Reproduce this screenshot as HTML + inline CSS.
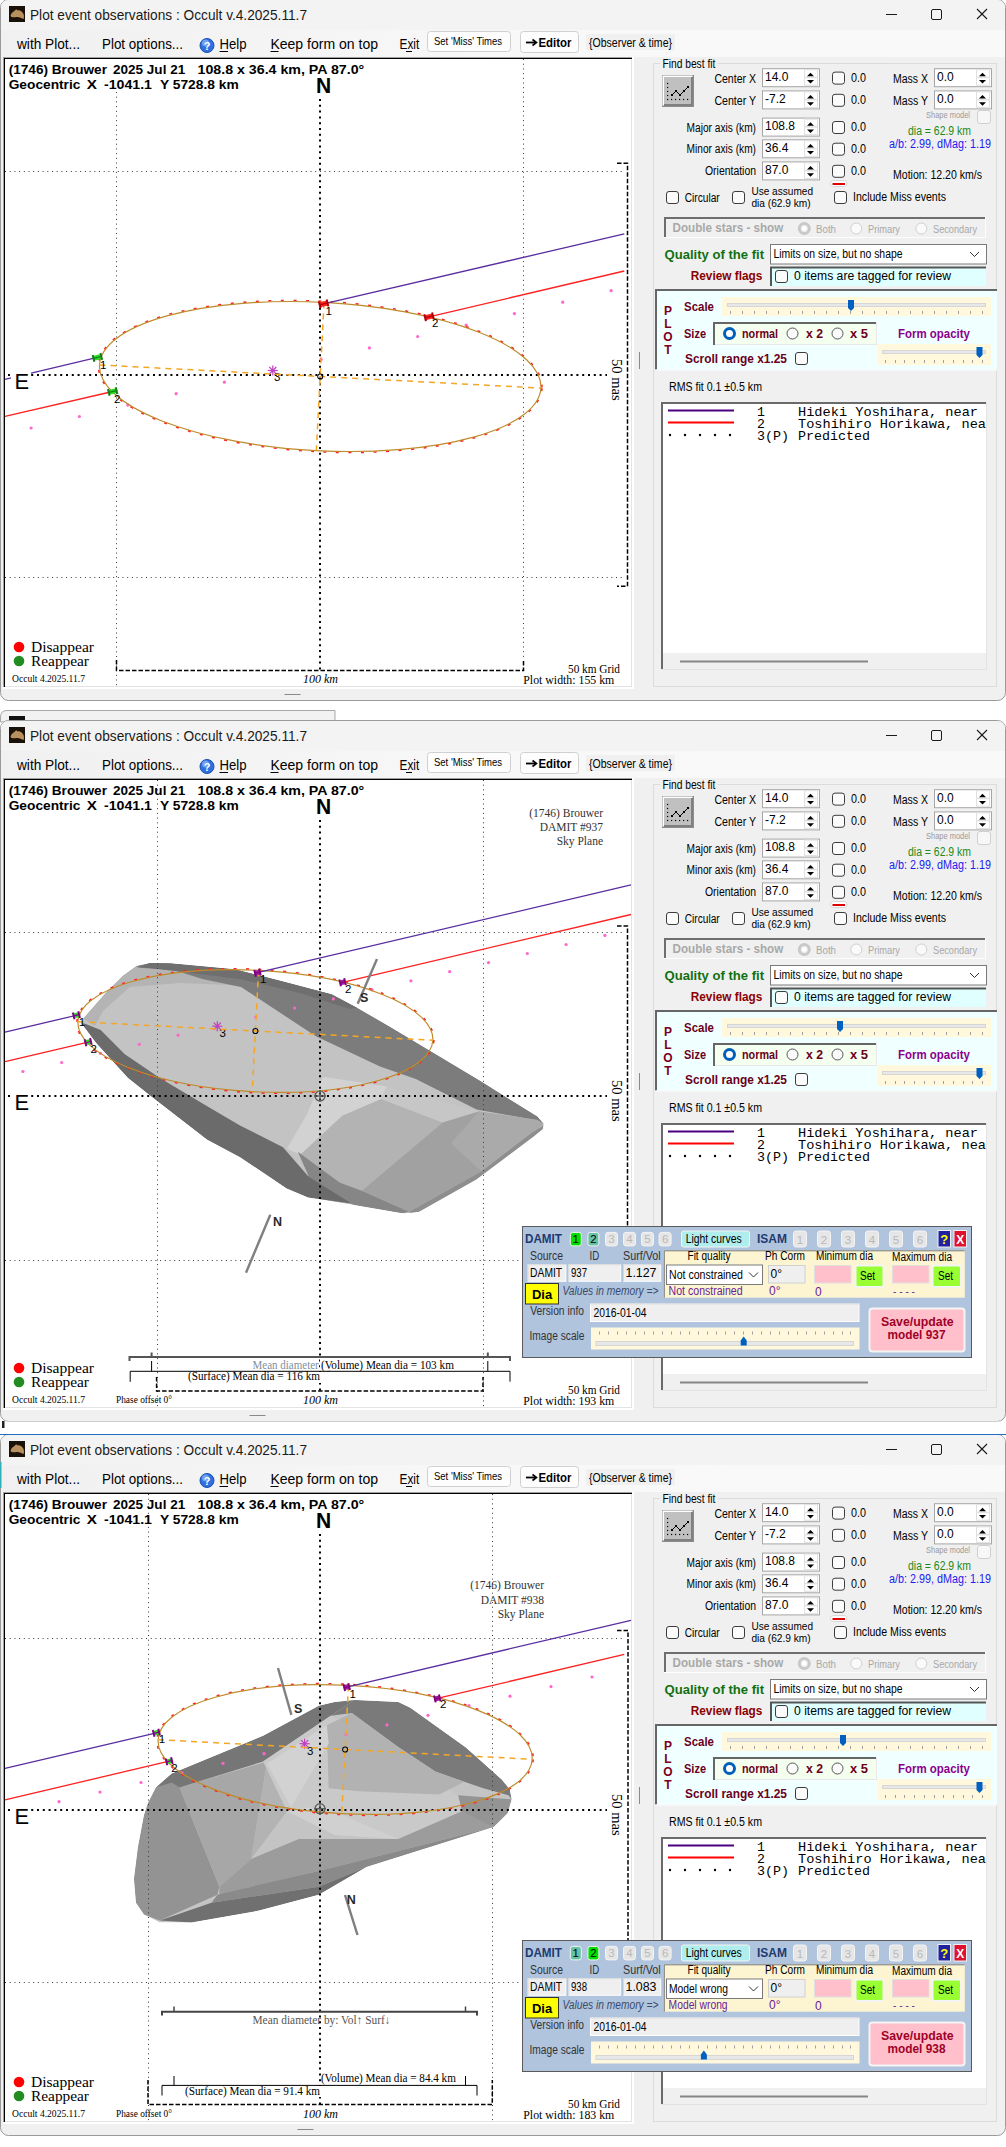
<!DOCTYPE html>
<html><head><meta charset="utf-8"><style>
html,body{margin:0;padding:0;background:#fff;}
svg{display:block;font-family:"Liberation Sans", sans-serif;}
</style></head><body>
<svg width="1006" height="2147" viewBox="0 0 1006 2147">
<defs><linearGradient id="mg" x1="0" y1="0" x2="1006" y2="0" gradientUnits="userSpaceOnUse"><stop offset="0" stop-color="#f0f0f0"/><stop offset="0.5" stop-color="#f8f8f8"/><stop offset="1" stop-color="#f9f9f9"/></linearGradient></defs>
<rect x="0" y="0" width="1006" height="2147" fill="#fff"/>

<rect x="0.5" y="-0.5" width="1005" height="701" fill="#f0f0f0" stroke="#9a9a9a" stroke-width="1" rx="8" />
<path d="M1,8 Q1,0 9,0 L997,0 Q1005,0 1005,8 L1005,30 L1,30 Z" fill="#f3f3f3"/>
<rect x="1" y="30" width="1004" height="27" fill="url(#mg)" />
<rect x="9" y="6" width="16" height="16" fill="#1a1208" />
<path d="M10.5,16 C11,13 13,12 14.5,11 C15.5,9.5 17,9 17.5,10.5 C19,10 21,10.5 22.5,12.5 C24,14 24.5,17 23.5,19 C21.5,18.5 19,16.5 16.5,17 C14.5,17.3 12,17.8 10.5,16 Z" fill="#b8905e" />
<text x="30" y="20.3" font-size="14.2" fill="#1a1a1a" textLength="277" lengthAdjust="spacingAndGlyphs" >Plot event observations : Occult v.4.2025.11.7</text>
<line x1="886" y1="14.5" x2="897" y2="14.5" stroke="#1a1a1a" stroke-width="1" />
<rect x="931.5" y="9.5" width="10" height="10" fill="none" stroke="#1a1a1a" stroke-width="1" rx="1.5" />
<line x1="977" y1="9" x2="987" y2="19" stroke="#1a1a1a" stroke-width="1.1" />
<line x1="987" y1="9" x2="977" y2="19" stroke="#1a1a1a" stroke-width="1.1" />
<text x="17" y="48.9" font-size="14" textLength="63" lengthAdjust="spacingAndGlyphs" >with Plot...</text>
<text x="102" y="48.9" font-size="14" textLength="81" lengthAdjust="spacingAndGlyphs" >Plot options...</text>
<circle cx="207" cy="45.5" r="7" fill="#2f6fe0" stroke="#1b4fb0" stroke-width="1"/>
<circle cx="205.5" cy="43" r="3.5" fill="#9cc4ff" opacity=".6"/>
<text x="207" y="50" font-size="11" font-weight="bold" fill="#fff" text-anchor="middle" >?</text>
<text x="219.5" y="48.9" font-size="14" textLength="27" lengthAdjust="spacingAndGlyphs" >Help</text>
<line x1="219.5" y1="51.5" x2="228" y2="51.5" stroke="#000" stroke-width="1" />
<text x="270.4" y="48.9" font-size="14" textLength="107.6" lengthAdjust="spacingAndGlyphs" >Keep form on top</text>
<line x1="270.5" y1="51.5" x2="278.5" y2="51.5" stroke="#000" stroke-width="1" />
<text x="399.5" y="48.9" font-size="14" textLength="19.7" lengthAdjust="spacingAndGlyphs" >Exit</text>
<line x1="406" y1="51.5" x2="412" y2="51.5" stroke="#000" stroke-width="1" />
<rect x="427.5" y="31.5" width="83" height="20" fill="#fdfdfd" stroke="#d0d0d0" stroke-width="1" rx="3" />
<text x="434" y="45" font-size="10.5" textLength="68" lengthAdjust="spacingAndGlyphs" >Set 'Miss' Times</text>
<rect x="520.5" y="31.5" width="58" height="21" fill="#fdfdfd" stroke="#d0d0d0" stroke-width="1" rx="3" />
<line x1="526" y1="42.5" x2="535" y2="42.5" stroke="#000" stroke-width="1.8" />
<path d="M532.5,39.5 L536.5,42.5 L532.5,45.5" fill="none" stroke="#000" stroke-width="1.6" />
<text x="538.5" y="47" font-size="13.3" font-weight="bold" textLength="33" lengthAdjust="spacingAndGlyphs" >Editor</text>
<rect x="586" y="34" width="89" height="16" fill="#f0f0f0" />
<text x="589" y="46.5" font-size="12" textLength="83" lengthAdjust="spacingAndGlyphs" >{Observer &amp; time}</text>
<rect x="3" y="57" width="631" height="632" fill="#ffffff" />
<rect x="3" y="57" width="629" height="1" fill="#a0a0a0" />
<rect x="3" y="57" width="1" height="630" fill="#a0a0a0" />
<rect x="4" y="58" width="628" height="1" fill="#000" />
<rect x="4" y="58" width="1" height="629" fill="#000" />
<rect x="5" y="686" width="627" height="1" fill="#e3e3e3" />
<rect x="631" y="59" width="1" height="628" fill="#e3e3e3" />
<line x1="284.5" y1="694.5" x2="300.5" y2="694.5" stroke="#8a8a8a" stroke-width="1" />
<line x1="639.5" y1="352" x2="639.5" y2="369" stroke="#8a8a8a" stroke-width="1" />
<line x1="116.5" y1="92" x2="116.5" y2="686" stroke="#383838" stroke-width="1" stroke-dasharray="1 3.7"/>
<line x1="523.5" y1="59" x2="523.5" y2="660" stroke="#383838" stroke-width="1" stroke-dasharray="1 3.7"/>
<line x1="5" y1="171.5" x2="625" y2="171.5" stroke="#383838" stroke-width="1" stroke-dasharray="1 3.7"/>
<line x1="5" y1="577.5" x2="625" y2="577.5" stroke="#383838" stroke-width="1" stroke-dasharray="1 3.7"/>
<line x1="320" y1="99" x2="320" y2="671" stroke="#000" stroke-width="2" stroke-dasharray="2 3.8"/>
<line x1="8" y1="375" x2="607" y2="375" stroke="#000" stroke-width="2" stroke-dasharray="2 3.8"/>
<path d="M617,163.3 L627.5,163.3 L627.5,586.3 L617,586.3" fill="none" stroke="#000" stroke-width="1.5" stroke-dasharray="4.5 2"/>
<path d="M116.5,660 L116.5,670.5 L523.5,670.5 L523.5,660" fill="none" stroke="#000" stroke-width="1.5" stroke-dasharray="4.5 2"/>
<circle cx="31.1" cy="428.0" r="1.6" fill="#ff66cc"/>
<circle cx="79.4" cy="416.5" r="1.6" fill="#ff66cc"/>
<circle cx="127.8" cy="405.1" r="1.6" fill="#ff66cc"/>
<circle cx="176.1" cy="393.7" r="1.6" fill="#ff66cc"/>
<circle cx="224.4" cy="382.2" r="1.6" fill="#ff66cc"/>
<circle cx="321.1" cy="359.4" r="1.6" fill="#ff66cc"/>
<circle cx="369.4" cy="347.9" r="1.6" fill="#ff66cc"/>
<circle cx="417.7" cy="336.5" r="1.6" fill="#ff66cc"/>
<circle cx="466.1" cy="325.0" r="1.6" fill="#ff66cc"/>
<circle cx="514.4" cy="313.6" r="1.6" fill="#ff66cc"/>
<circle cx="562.7" cy="302.2" r="1.6" fill="#ff66cc"/>
<circle cx="611.1" cy="290.7" r="1.6" fill="#ff66cc"/>
<line x1="267.8" y1="370.5" x2="277.8" y2="370.5" stroke="#c040c0" stroke-width="1.2" transform="rotate(0 272.8 370.5)"/>
<line x1="267.8" y1="370.5" x2="277.8" y2="370.5" stroke="#c040c0" stroke-width="1.2" transform="rotate(45 272.8 370.5)"/>
<line x1="267.8" y1="370.5" x2="277.8" y2="370.5" stroke="#c040c0" stroke-width="1.2" transform="rotate(90 272.8 370.5)"/>
<line x1="267.8" y1="370.5" x2="277.8" y2="370.5" stroke="#c040c0" stroke-width="1.2" transform="rotate(135 272.8 370.5)"/>
<text x="274" y="381" font-size="11.5" >3</text>
<g transform="translate(320.2,376.5) rotate(3)"><ellipse cx="0" cy="0" rx="222" ry="75.2" fill="none" stroke="#ff2020" stroke-width="1.6" stroke-dasharray="3 9.5"/><ellipse cx="0" cy="0" rx="221" ry="74.2" fill="none" stroke="#c08a2a" stroke-width="1.15"/><line x1="-221" y1="0" x2="221" y2="0" stroke="#f5a623" stroke-width="1.5" stroke-dasharray="6 5"/><line x1="0" y1="-74.2" x2="0" y2="74.2" stroke="#f5a623" stroke-width="1.5" stroke-dasharray="6 5"/><circle cx="0" cy="0" r="2.5" fill="none" stroke="#000" stroke-width="1"/></g>
<line x1="5" y1="379.3" x2="97.4" y2="357.4" stroke="#5a2ea0" stroke-width="1.3" />
<line x1="323.6" y1="303.9" x2="624.3" y2="233.9" stroke="#5a2ea0" stroke-width="1.3" />
<line x1="5" y1="416.3" x2="112.7" y2="391.5" stroke="#ff2020" stroke-width="1.3" />
<line x1="429" y1="316.8" x2="624.3" y2="271" stroke="#ff2020" stroke-width="1.3" />
<g transform="translate(97.4,357.4) rotate(-13.2)"><rect x="-4" y="-2.5" width="8" height="5" fill="#22dd22"/><rect x="-4" y="-0.6" width="8" height="1.2" fill="#1a7a1a"/><rect x="-5" y="-3.5" width="2" height="7" fill="#1a7a1a"/><rect x="3" y="-3.5" width="2" height="7" fill="#1a7a1a"/></g>
<g transform="translate(112.7,391.5) rotate(-13.2)"><rect x="-4" y="-2.5" width="8" height="5" fill="#22dd22"/><rect x="-4" y="-0.6" width="8" height="1.2" fill="#1a7a1a"/><rect x="-5" y="-3.5" width="2" height="7" fill="#1a7a1a"/><rect x="3" y="-3.5" width="2" height="7" fill="#1a7a1a"/></g>
<g transform="translate(323.6,303.9) rotate(-13.2)"><rect x="-4" y="-2.5" width="8" height="5" fill="#ff2020"/><rect x="-4" y="-0.6" width="8" height="1.2" fill="#b00000"/><rect x="-5" y="-3.5" width="2" height="7" fill="#b00000"/><rect x="3" y="-3.5" width="2" height="7" fill="#b00000"/></g>
<g transform="translate(429,316.8) rotate(-13.2)"><rect x="-4" y="-2.5" width="8" height="5" fill="#ff2020"/><rect x="-4" y="-0.6" width="8" height="1.2" fill="#b00000"/><rect x="-5" y="-3.5" width="2" height="7" fill="#b00000"/><rect x="3" y="-3.5" width="2" height="7" fill="#b00000"/></g>
<text x="100" y="369" font-size="11.5" >1</text>
<text x="114" y="403" font-size="11.5" >2</text>
<text x="325.5" y="315" font-size="11.5" >1</text>
<text x="432" y="327" font-size="11.5" >2</text>
<rect x="11" y="369" width="20" height="22" fill="#fff" />
<text x="14.6" y="388.7" font-size="22.5" textLength="14.6" lengthAdjust="spacingAndGlyphs" >E</text>
<text x="8.7" y="73.8" font-size="13.3" font-weight="bold" textLength="98.3" lengthAdjust="spacingAndGlyphs" >(1746) Brouwer</text>
<text x="113" y="73.8" font-size="13.3" font-weight="bold" textLength="72.2" lengthAdjust="spacingAndGlyphs" >2025 Jul 21</text>
<text x="197.5" y="73.8" font-size="13.3" font-weight="bold" textLength="166.8" lengthAdjust="spacingAndGlyphs" >108.8 x 36.4 km, PA 87.0°</text>
<text x="8.7" y="89.4" font-size="13.3" font-weight="bold" textLength="71.7" lengthAdjust="spacingAndGlyphs" >Geocentric</text>
<text x="86.8" y="89.4" font-size="13.3" font-weight="bold" textLength="10.2" lengthAdjust="spacingAndGlyphs" >X</text>
<text x="104" y="89.4" font-size="13.3" font-weight="bold" textLength="48" lengthAdjust="spacingAndGlyphs" >-1041.1</text>
<text x="160" y="89.4" font-size="13.3" font-weight="bold" textLength="78.7" lengthAdjust="spacingAndGlyphs" >Y 5728.8 km</text>
<text x="316" y="93.1" font-size="21.5" font-weight="bold" textLength="15.2" lengthAdjust="spacingAndGlyphs" >N</text>
<text transform="translate(612,359) rotate(90)" x="0" y="0" font-size="15" font-family='"Liberation Serif", serif' textLength="41.7" lengthAdjust="spacingAndGlyphs">50 mas</text>
<circle cx="19" cy="647" r="5.3" fill="#ff0000"/>
<circle cx="19" cy="661" r="5.3" fill="#228b22"/>
<text x="31" y="652" font-size="15.5" font-family='"Liberation Serif", serif' textLength="63" lengthAdjust="spacingAndGlyphs" >Disappear</text>
<text x="31" y="666" font-size="15.5" font-family='"Liberation Serif", serif' textLength="58" lengthAdjust="spacingAndGlyphs" >Reappear</text>
<text x="12" y="681.5" font-size="10" font-family='"Liberation Serif", serif' textLength="73" lengthAdjust="spacingAndGlyphs" >Occult 4.2025.11.7</text>
<rect x="301" y="673.5" width="39" height="12" fill="#fff" />
<text x="303" y="683" font-size="12" font-family='"Liberation Serif", serif' font-style="italic" textLength="35" lengthAdjust="spacingAndGlyphs" >100 km</text>
<text x="568" y="672.6" font-size="12" font-family='"Liberation Serif", serif' textLength="52" lengthAdjust="spacingAndGlyphs" >50 km Grid</text>
<text x="523.3" y="683.7" font-size="13" font-family='"Liberation Serif", serif' textLength="91" lengthAdjust="spacingAndGlyphs" >Plot width: 155 km</text>
<rect x="653.5" y="63.5" width="343" height="623" fill="none" stroke="#dcdcdc" stroke-width="1" />
<rect x="660" y="60" width="58" height="8" fill="#f0f0f0" />
<text x="662.4" y="68" font-size="12" textLength="53" lengthAdjust="spacingAndGlyphs" >Find best fit</text>
<rect x="662" y="75" width="32" height="32" fill="#8c8c8c" />
<rect x="662.5" y="75.5" width="30" height="30" fill="#ffffff" />
<rect x="664" y="77" width="29" height="29" fill="#808080" />
<rect x="664" y="77" width="27" height="27" fill="#c0c0c0" />
<rect x="667" y="82.9" width="1.2" height="1.2" fill="#000" />
<rect x="667" y="86.9" width="1.2" height="1.2" fill="#000" />
<rect x="667" y="90.9" width="1.2" height="1.2" fill="#000" />
<rect x="667" y="94.9" width="1.2" height="1.2" fill="#000" />
<rect x="667" y="98.9" width="1.2" height="1.2" fill="#000" />
<rect x="671.0" y="98.9" width="1.2" height="1.2" fill="#000" />
<rect x="675.0" y="98.9" width="1.2" height="1.2" fill="#000" />
<rect x="679.0" y="98.9" width="1.2" height="1.2" fill="#000" />
<rect x="683.0" y="98.9" width="1.2" height="1.2" fill="#000" />
<rect x="687.0" y="98.9" width="1.2" height="1.2" fill="#000" />
<path d="M672,95 L676,91 L680,95 L684,91 L688,87" fill="none" stroke="#000" stroke-width="1" />
<rect x="671" y="94" width="2" height="2" fill="#000" />
<rect x="675" y="90" width="2" height="2" fill="#000" />
<rect x="679" y="94" width="2" height="2" fill="#000" />
<rect x="683" y="90" width="2" height="2" fill="#000" />
<rect x="687" y="86" width="2" height="2" fill="#000" />
<text x="714.4" y="82.6" font-size="12" textLength="41.60000000000002" lengthAdjust="spacingAndGlyphs" >Center X</text>
<rect x="762.5" y="68.7" width="57" height="18" fill="#fff" stroke="#a6a6a6" stroke-width="1" />
<rect x="804.5" y="69.7" width="13" height="7.5" fill="#fff" stroke="#e0e0e0" stroke-width="1" />
<rect x="804.5" y="77.7" width="13" height="7.5" fill="#fff" stroke="#e0e0e0" stroke-width="1" />
<path d="M807.0,76.33 L810.5,72.83 L814.0,76.33 Z" fill="#000" />
<path d="M807.0,80.0 L810.5,83.5 L814.0,80.0 Z" fill="#000" />
<text x="765" y="80.7" font-size="12" >14.0</text>
<rect x="832.5" y="72.10000000000001" width="12" height="12" fill="#fbfbfb" stroke="#3c3c3c" stroke-width="1" rx="2.5" />
<text x="851" y="81.60000000000001" font-size="12" textLength="15" lengthAdjust="spacingAndGlyphs" >0.0</text>
<text x="714.4" y="104.6" font-size="12" textLength="41.60000000000002" lengthAdjust="spacingAndGlyphs" >Center Y</text>
<rect x="762.5" y="90.9" width="57" height="18" fill="#fff" stroke="#a6a6a6" stroke-width="1" />
<rect x="804.5" y="91.9" width="13" height="7.5" fill="#fff" stroke="#e0e0e0" stroke-width="1" />
<rect x="804.5" y="99.9" width="13" height="7.5" fill="#fff" stroke="#e0e0e0" stroke-width="1" />
<path d="M807.0,98.53 L810.5,95.03 L814.0,98.53 Z" fill="#000" />
<path d="M807.0,102.2 L810.5,105.7 L814.0,102.2 Z" fill="#000" />
<text x="765" y="102.9" font-size="12" >-7.2</text>
<rect x="832.5" y="94.30000000000001" width="12" height="12" fill="#fbfbfb" stroke="#3c3c3c" stroke-width="1" rx="2.5" />
<text x="851" y="103.80000000000001" font-size="12" textLength="15" lengthAdjust="spacingAndGlyphs" >0.0</text>
<text x="686.6" y="131.7" font-size="12" textLength="69.39999999999998" lengthAdjust="spacingAndGlyphs" >Major axis (km)</text>
<rect x="762.5" y="118.1" width="57" height="18" fill="#fff" stroke="#a6a6a6" stroke-width="1" />
<rect x="804.5" y="119.1" width="13" height="7.5" fill="#fff" stroke="#e0e0e0" stroke-width="1" />
<rect x="804.5" y="127.1" width="13" height="7.5" fill="#fff" stroke="#e0e0e0" stroke-width="1" />
<path d="M807.0,125.72999999999999 L810.5,122.22999999999999 L814.0,125.72999999999999 Z" fill="#000" />
<path d="M807.0,129.4 L810.5,132.9 L814.0,129.4 Z" fill="#000" />
<text x="765" y="130.1" font-size="12" >108.8</text>
<rect x="832.5" y="121.5" width="12" height="12" fill="#fbfbfb" stroke="#3c3c3c" stroke-width="1" rx="2.5" />
<text x="851" y="131.0" font-size="12" textLength="15" lengthAdjust="spacingAndGlyphs" >0.0</text>
<text x="686.6" y="153.4" font-size="12" textLength="69.39999999999998" lengthAdjust="spacingAndGlyphs" >Minor axis (km)</text>
<rect x="762.5" y="139.8" width="57" height="18" fill="#fff" stroke="#a6a6a6" stroke-width="1" />
<rect x="804.5" y="140.8" width="13" height="7.5" fill="#fff" stroke="#e0e0e0" stroke-width="1" />
<rect x="804.5" y="148.8" width="13" height="7.5" fill="#fff" stroke="#e0e0e0" stroke-width="1" />
<path d="M807.0,147.43 L810.5,143.93 L814.0,147.43 Z" fill="#000" />
<path d="M807.0,151.10000000000002 L810.5,154.60000000000002 L814.0,151.10000000000002 Z" fill="#000" />
<text x="765" y="151.8" font-size="12" >36.4</text>
<rect x="832.5" y="143.20000000000002" width="12" height="12" fill="#fbfbfb" stroke="#3c3c3c" stroke-width="1" rx="2.5" />
<text x="851" y="152.70000000000002" font-size="12" textLength="15" lengthAdjust="spacingAndGlyphs" >0.0</text>
<text x="705" y="175.2" font-size="12" textLength="51" lengthAdjust="spacingAndGlyphs" >Orientation</text>
<rect x="762.5" y="161.9" width="57" height="18" fill="#fff" stroke="#a6a6a6" stroke-width="1" />
<rect x="804.5" y="162.9" width="13" height="7.5" fill="#fff" stroke="#e0e0e0" stroke-width="1" />
<rect x="804.5" y="170.9" width="13" height="7.5" fill="#fff" stroke="#e0e0e0" stroke-width="1" />
<path d="M807.0,169.53 L810.5,166.03 L814.0,169.53 Z" fill="#000" />
<path d="M807.0,173.20000000000002 L810.5,176.70000000000002 L814.0,173.20000000000002 Z" fill="#000" />
<text x="765" y="173.9" font-size="12" >87.0</text>
<rect x="832.5" y="165.3" width="12" height="12" fill="#fbfbfb" stroke="#3c3c3c" stroke-width="1" rx="2.5" />
<text x="851" y="174.8" font-size="12" textLength="15" lengthAdjust="spacingAndGlyphs" >0.0</text>
<text x="893" y="82.6" font-size="12" textLength="35" lengthAdjust="spacingAndGlyphs" >Mass X</text>
<rect x="934.5" y="68.7" width="57" height="18" fill="#fff" stroke="#a6a6a6" stroke-width="1" />
<rect x="976.5" y="69.7" width="13" height="7.5" fill="#fff" stroke="#e0e0e0" stroke-width="1" />
<rect x="976.5" y="77.7" width="13" height="7.5" fill="#fff" stroke="#e0e0e0" stroke-width="1" />
<path d="M979.0,76.33 L982.5,72.83 L986.0,76.33 Z" fill="#000" />
<path d="M979.0,80.0 L982.5,83.5 L986.0,80.0 Z" fill="#000" />
<text x="937" y="80.7" font-size="12" >0.0</text>
<text x="893" y="104.6" font-size="12" textLength="35" lengthAdjust="spacingAndGlyphs" >Mass Y</text>
<rect x="934.5" y="90.9" width="57" height="18" fill="#fff" stroke="#a6a6a6" stroke-width="1" />
<rect x="976.5" y="91.9" width="13" height="7.5" fill="#fff" stroke="#e0e0e0" stroke-width="1" />
<rect x="976.5" y="99.9" width="13" height="7.5" fill="#fff" stroke="#e0e0e0" stroke-width="1" />
<path d="M979.0,98.53 L982.5,95.03 L986.0,98.53 Z" fill="#000" />
<path d="M979.0,102.2 L982.5,105.7 L986.0,102.2 Z" fill="#000" />
<text x="937" y="102.9" font-size="12" >0.0</text>
<text x="926" y="118" font-size="8.5" fill="#9a9a9a" textLength="44" lengthAdjust="spacingAndGlyphs" >Shape model</text>
<rect x="977.5" y="110.5" width="13" height="13" fill="#f7f7f7" stroke="#cfcfcf" stroke-width="1" rx="2.5" />
<text x="908" y="135" font-size="12" fill="#1a8a1a" textLength="63" lengthAdjust="spacingAndGlyphs" >dia = 62.9 km</text>
<text x="889" y="148" font-size="12" fill="#1c1cf0" textLength="102" lengthAdjust="spacingAndGlyphs" >a/b: 2.99, dMag: 1.19</text>
<text x="893" y="179" font-size="12" textLength="89" lengthAdjust="spacingAndGlyphs" >Motion: 12.20 km/s</text>
<rect x="830.5" y="180.5" width="16.5" height="6" fill="#fff" stroke="#d8d8d8" stroke-width="1" rx="3" />
<line x1="832.5" y1="184" x2="845" y2="184" stroke="#e00000" stroke-width="2" />
<rect x="666.5" y="191.5" width="12" height="12" fill="#fbfbfb" stroke="#3c3c3c" stroke-width="1" rx="2.5" />
<text x="684.7" y="201.6" font-size="12" textLength="35" lengthAdjust="spacingAndGlyphs" >Circular</text>
<rect x="732.5" y="191.5" width="12" height="12" fill="#fbfbfb" stroke="#3c3c3c" stroke-width="1" rx="2.5" />
<text x="751.4" y="195" font-size="11" textLength="61.6" lengthAdjust="spacingAndGlyphs" >Use assumed</text>
<text x="751.4" y="207.3" font-size="11" textLength="59.3" lengthAdjust="spacingAndGlyphs" >dia (62.9 km)</text>
<rect x="834.5" y="191.5" width="12" height="12" fill="#fbfbfb" stroke="#3c3c3c" stroke-width="1" rx="2.5" />
<text x="853" y="201" font-size="12" textLength="93" lengthAdjust="spacingAndGlyphs" >Include Miss events</text>
<rect x="664.5" y="217.5" width="321" height="20" fill="#f0f0f0" stroke="#fdfdfd" stroke-width="1" />
<path d="M665,237 L665,218 L985,218" fill="none" stroke="#6e6e6e" stroke-width="2" />
<text x="672.6" y="231.6" font-size="12" font-weight="bold" fill="#a8a8a8" textLength="110.7" lengthAdjust="spacingAndGlyphs" >Double stars - show</text>
<circle cx="804.3" cy="228.5" r="5" fill="none" stroke="#c8c8c8" stroke-width="3"/>
<circle cx="804.3" cy="228.5" r="2.2" fill="#fff"/>
<text x="816" y="233" font-size="10" fill="#a8a8a8" textLength="20" lengthAdjust="spacingAndGlyphs" >Both</text>
<circle cx="856.3" cy="228.5" r="5.5" fill="#fafafa" stroke="#cfcfcf" stroke-width="1"/>
<text x="868" y="233" font-size="10" fill="#a8a8a8" textLength="32" lengthAdjust="spacingAndGlyphs" >Primary</text>
<circle cx="921.3" cy="228.5" r="5.5" fill="#fafafa" stroke="#cfcfcf" stroke-width="1"/>
<text x="933" y="233" font-size="10" fill="#a8a8a8" textLength="44" lengthAdjust="spacingAndGlyphs" >Secondary</text>
<text x="664.6" y="259.4" font-size="12.5" font-weight="bold" fill="#107010" textLength="99.4" lengthAdjust="spacingAndGlyphs" >Quality of the fit</text>
<rect x="770.5" y="244.5" width="216" height="19.5" fill="#fff" stroke="#7a7a7a" stroke-width="1" />
<text x="773.5" y="258" font-size="12" textLength="129" lengthAdjust="spacingAndGlyphs" >Limits on size, but no shape</text>
<path d="M970,252 L974.5,256.5 L979,252" fill="none" stroke="#333" stroke-width="1" />
<text x="762.4" y="279.6" font-size="12.5" font-weight="bold" fill="#8b0000" text-anchor="end" textLength="71.7" lengthAdjust="spacingAndGlyphs" >Review flags</text>
<rect x="770" y="266.5" width="216" height="19.5" fill="#e0ffff" />
<path d="M771,286 L771,267.5 L986,267.5" fill="none" stroke="#555" stroke-width="2" />
<rect x="775.5" y="270.5" width="12" height="12" fill="#fbfbfb" stroke="#3c3c3c" stroke-width="1" rx="2.5" />
<text x="794" y="279.6" font-size="12" textLength="157" lengthAdjust="spacingAndGlyphs" >0 items are tagged for review</text>
<rect x="655.5" y="289" width="341.5" height="80.5" fill="#f0ffff" />
<path d="M656,369.5 L656,290 L997,290" fill="none" stroke="#666" stroke-width="2" />
<line x1="655.5" y1="370" x2="997" y2="370" stroke="#fdfdfd" stroke-width="1" />
<text x="668" y="314.7" font-size="12" font-weight="bold" fill="#7a0020" text-anchor="middle" >P</text>
<text x="668" y="327.7" font-size="12" font-weight="bold" fill="#7a0020" text-anchor="middle" >L</text>
<text x="668" y="340.6" font-size="12" font-weight="bold" fill="#7a0020" text-anchor="middle" >O</text>
<text x="668" y="353.6" font-size="12" font-weight="bold" fill="#7a0020" text-anchor="middle" >T</text>
<text x="684" y="311" font-size="12.5" font-weight="bold" fill="#6b0020" textLength="30" lengthAdjust="spacingAndGlyphs" >Scale</text>
<rect x="722" y="297" width="269" height="19" fill="#fff8dc" />
<rect x="727.5" y="303.5" width="258" height="3" fill="#e7e7e7" stroke="#d6d6d6" stroke-width="1" />
<line x1="730.5" y1="311" x2="730.5" y2="314" stroke="#a0a0a0" stroke-width="1" />
<line x1="742.5" y1="311" x2="742.5" y2="314" stroke="#a0a0a0" stroke-width="1" />
<line x1="754.5" y1="311" x2="754.5" y2="314" stroke="#a0a0a0" stroke-width="1" />
<line x1="766.5" y1="311" x2="766.5" y2="314" stroke="#a0a0a0" stroke-width="1" />
<line x1="778.5" y1="311" x2="778.5" y2="314" stroke="#a0a0a0" stroke-width="1" />
<line x1="790.5" y1="311" x2="790.5" y2="314" stroke="#a0a0a0" stroke-width="1" />
<line x1="802.5" y1="311" x2="802.5" y2="314" stroke="#a0a0a0" stroke-width="1" />
<line x1="814.5" y1="311" x2="814.5" y2="314" stroke="#a0a0a0" stroke-width="1" />
<line x1="826.5" y1="311" x2="826.5" y2="314" stroke="#a0a0a0" stroke-width="1" />
<line x1="838.5" y1="311" x2="838.5" y2="314" stroke="#a0a0a0" stroke-width="1" />
<line x1="850.5" y1="311" x2="850.5" y2="314" stroke="#a0a0a0" stroke-width="1" />
<line x1="862.5" y1="311" x2="862.5" y2="314" stroke="#a0a0a0" stroke-width="1" />
<line x1="874.5" y1="311" x2="874.5" y2="314" stroke="#a0a0a0" stroke-width="1" />
<line x1="886.5" y1="311" x2="886.5" y2="314" stroke="#a0a0a0" stroke-width="1" />
<line x1="898.5" y1="311" x2="898.5" y2="314" stroke="#a0a0a0" stroke-width="1" />
<line x1="910.5" y1="311" x2="910.5" y2="314" stroke="#a0a0a0" stroke-width="1" />
<line x1="922.5" y1="311" x2="922.5" y2="314" stroke="#a0a0a0" stroke-width="1" />
<line x1="934.5" y1="311" x2="934.5" y2="314" stroke="#a0a0a0" stroke-width="1" />
<line x1="946.5" y1="311" x2="946.5" y2="314" stroke="#a0a0a0" stroke-width="1" />
<line x1="958.5" y1="311" x2="958.5" y2="314" stroke="#a0a0a0" stroke-width="1" />
<line x1="970.5" y1="311" x2="970.5" y2="314" stroke="#a0a0a0" stroke-width="1" />
<line x1="982.5" y1="311" x2="982.5" y2="314" stroke="#a0a0a0" stroke-width="1" />
<path d="M848,300 L854,300 L854,308 L851,311 L848,308 Z" fill="#0060c0" />
<text x="684" y="338" font-size="12.5" font-weight="bold" fill="#6b0020" textLength="22" lengthAdjust="spacingAndGlyphs" >Size</text>
<rect x="713.5" y="322.5" width="163" height="22" fill="#f5fff0" stroke="#e8e8e8" stroke-width="1" />
<path d="M714,345 L714,323 L876,323" fill="none" stroke="#666" stroke-width="2" />
<circle cx="729.5" cy="333.5" r="5" fill="#fff" stroke="#005fb8" stroke-width="3"/>
<text x="742" y="338" font-size="12.5" font-weight="bold" fill="#6b0020" textLength="36" lengthAdjust="spacingAndGlyphs" >normal</text>
<circle cx="792.5" cy="333.5" r="5.5" fill="#fafafa" stroke="#555" stroke-width="1"/>
<text x="806" y="338" font-size="12.5" font-weight="bold" fill="#6b0020" textLength="17" lengthAdjust="spacingAndGlyphs" >x 2</text>
<circle cx="837.5" cy="333.5" r="5.5" fill="#fafafa" stroke="#555" stroke-width="1"/>
<text x="850" y="338" font-size="12.5" font-weight="bold" fill="#6b0020" textLength="18" lengthAdjust="spacingAndGlyphs" >x 5</text>
<text x="898" y="338" font-size="12.5" font-weight="bold" fill="#8b008b" textLength="72" lengthAdjust="spacingAndGlyphs" >Form opacity</text>
<rect x="877" y="344" width="114" height="21" fill="#fff8dc" />
<rect x="882.5" y="350.5" width="103" height="3" fill="#e7e7e7" stroke="#d6d6d6" stroke-width="1" />
<line x1="885.5" y1="360" x2="885.5" y2="363" stroke="#a0a0a0" stroke-width="1" />
<line x1="895.5" y1="360" x2="895.5" y2="363" stroke="#a0a0a0" stroke-width="1" />
<line x1="904.5" y1="360" x2="904.5" y2="363" stroke="#a0a0a0" stroke-width="1" />
<line x1="914.5" y1="360" x2="914.5" y2="363" stroke="#a0a0a0" stroke-width="1" />
<line x1="924.5" y1="360" x2="924.5" y2="363" stroke="#a0a0a0" stroke-width="1" />
<line x1="934.5" y1="360" x2="934.5" y2="363" stroke="#a0a0a0" stroke-width="1" />
<line x1="943.5" y1="360" x2="943.5" y2="363" stroke="#a0a0a0" stroke-width="1" />
<line x1="953.5" y1="360" x2="953.5" y2="363" stroke="#a0a0a0" stroke-width="1" />
<line x1="963.5" y1="360" x2="963.5" y2="363" stroke="#a0a0a0" stroke-width="1" />
<line x1="972.5" y1="360" x2="972.5" y2="363" stroke="#a0a0a0" stroke-width="1" />
<line x1="982.5" y1="360" x2="982.5" y2="363" stroke="#a0a0a0" stroke-width="1" />
<path d="M976.5,347 L982.5,347 L982.5,355 L979.5,358 L976.5,355 Z" fill="#0060c0" />
<text x="685" y="363" font-size="12.5" font-weight="bold" fill="#6b0020" textLength="102" lengthAdjust="spacingAndGlyphs" >Scroll range x1.25</text>
<rect x="795.5" y="352.5" width="12" height="12" fill="#fbfbfb" stroke="#3c3c3c" stroke-width="1" rx="2.5" />
<text x="669" y="391" font-size="12" textLength="93" lengthAdjust="spacingAndGlyphs" >RMS fit 0.1 ±0.5 km</text>
<rect x="661" y="402" width="326" height="268" fill="#fff" />
<path d="M662,670 L662,403 L987,403" fill="none" stroke="#6a6a6a" stroke-width="2" />
<rect x="663" y="653" width="324" height="16" fill="#f0f0f0" />
<line x1="680" y1="661.5" x2="868" y2="661.5" stroke="#858585" stroke-width="2" />
<line x1="986.5" y1="402" x2="986.5" y2="670" stroke="#e3e3e3" stroke-width="1" />
<line x1="661" y1="669.5" x2="987" y2="669.5" stroke="#e3e3e3" stroke-width="1" />
<line x1="668" y1="410.5" x2="734" y2="410.5" stroke="#4b0082" stroke-width="2" />
<line x1="668" y1="422.5" x2="734" y2="422.5" stroke="#ff0000" stroke-width="2" />
<circle cx="670" cy="435" r="1.2" fill="#000"/>
<circle cx="685" cy="435" r="1.2" fill="#000"/>
<circle cx="700" cy="435" r="1.2" fill="#000"/>
<circle cx="715" cy="435" r="1.2" fill="#000"/>
<circle cx="730" cy="435" r="1.2" fill="#000"/>
<text x="757" y="416" font-size="13.2" font-family='"Liberation Mono", monospace' >1</text>
<text x="798" y="416" font-size="13.2" font-family='"Liberation Mono", monospace' textLength="180" lengthAdjust="spacingAndGlyphs" >Hideki Yoshihara, near</text>
<text x="757" y="428" font-size="13.2" font-family='"Liberation Mono", monospace' >2</text>
<text x="798" y="428" font-size="13.2" font-family='"Liberation Mono", monospace' textLength="188" lengthAdjust="spacingAndGlyphs" >Toshihiro Horikawa, nea</text>
<text x="757" y="440" font-size="13.2" font-family='"Liberation Mono", monospace' textLength="32" lengthAdjust="spacingAndGlyphs" >3(P)</text>
<text x="798" y="440" font-size="13.2" font-family='"Liberation Mono", monospace' textLength="72" lengthAdjust="spacingAndGlyphs" >Predicted</text>
<path d="M0.5,722 L0.5,717 Q0.5,710.5 7,710.5 L335,710.5 L335,722 Z" fill="#f2f2f2" stroke="#a8a8a8" stroke-width="1"/>
<rect x="9" y="716" width="16" height="6" fill="#111" />
<rect x="0.5" y="720.5" width="1005" height="701" fill="#f0f0f0" stroke="#9a9a9a" stroke-width="1" rx="8" />
<path d="M1,729 Q1,721 9,721 L997,721 Q1005,721 1005,729 L1005,751 L1,751 Z" fill="#f3f3f3"/>
<rect x="1" y="751" width="1004" height="27" fill="url(#mg)" />
<rect x="9" y="727" width="16" height="16" fill="#1a1208" />
<path d="M10.5,737 C11,734 13,733 14.5,732 C15.5,730.5 17,730 17.5,731.5 C19,731 21,731.5 22.5,733.5 C24,735 24.5,738 23.5,740 C21.5,739.5 19,737.5 16.5,738 C14.5,738.3 12,738.8 10.5,737 Z" fill="#b8905e" />
<text x="30" y="741.3" font-size="14.2" fill="#1a1a1a" textLength="277" lengthAdjust="spacingAndGlyphs" >Plot event observations : Occult v.4.2025.11.7</text>
<line x1="886" y1="735.5" x2="897" y2="735.5" stroke="#1a1a1a" stroke-width="1" />
<rect x="931.5" y="730.5" width="10" height="10" fill="none" stroke="#1a1a1a" stroke-width="1" rx="1.5" />
<line x1="977" y1="730" x2="987" y2="740" stroke="#1a1a1a" stroke-width="1.1" />
<line x1="987" y1="730" x2="977" y2="740" stroke="#1a1a1a" stroke-width="1.1" />
<text x="17" y="769.9" font-size="14" textLength="63" lengthAdjust="spacingAndGlyphs" >with Plot...</text>
<text x="102" y="769.9" font-size="14" textLength="81" lengthAdjust="spacingAndGlyphs" >Plot options...</text>
<circle cx="207" cy="766.5" r="7" fill="#2f6fe0" stroke="#1b4fb0" stroke-width="1"/>
<circle cx="205.5" cy="764" r="3.5" fill="#9cc4ff" opacity=".6"/>
<text x="207" y="771" font-size="11" font-weight="bold" fill="#fff" text-anchor="middle" >?</text>
<text x="219.5" y="769.9" font-size="14" textLength="27" lengthAdjust="spacingAndGlyphs" >Help</text>
<line x1="219.5" y1="772.5" x2="228" y2="772.5" stroke="#000" stroke-width="1" />
<text x="270.4" y="769.9" font-size="14" textLength="107.6" lengthAdjust="spacingAndGlyphs" >Keep form on top</text>
<line x1="270.5" y1="772.5" x2="278.5" y2="772.5" stroke="#000" stroke-width="1" />
<text x="399.5" y="769.9" font-size="14" textLength="19.7" lengthAdjust="spacingAndGlyphs" >Exit</text>
<line x1="406" y1="772.5" x2="412" y2="772.5" stroke="#000" stroke-width="1" />
<rect x="427.5" y="752.5" width="83" height="20" fill="#fdfdfd" stroke="#d0d0d0" stroke-width="1" rx="3" />
<text x="434" y="766" font-size="10.5" textLength="68" lengthAdjust="spacingAndGlyphs" >Set 'Miss' Times</text>
<rect x="520.5" y="752.5" width="58" height="21" fill="#fdfdfd" stroke="#d0d0d0" stroke-width="1" rx="3" />
<line x1="526" y1="763.5" x2="535" y2="763.5" stroke="#000" stroke-width="1.8" />
<path d="M532.5,760.5 L536.5,763.5 L532.5,766.5" fill="none" stroke="#000" stroke-width="1.6" />
<text x="538.5" y="768" font-size="13.3" font-weight="bold" textLength="33" lengthAdjust="spacingAndGlyphs" >Editor</text>
<rect x="586" y="755" width="89" height="16" fill="#f0f0f0" />
<text x="589" y="767.5" font-size="12" textLength="83" lengthAdjust="spacingAndGlyphs" >{Observer &amp; time}</text>
<rect x="3" y="778" width="631" height="632" fill="#ffffff" />
<rect x="3" y="778" width="629" height="1" fill="#a0a0a0" />
<rect x="3" y="778" width="1" height="630" fill="#a0a0a0" />
<rect x="4" y="779" width="628" height="1" fill="#000" />
<rect x="4" y="779" width="1" height="629" fill="#000" />
<rect x="5" y="1407" width="627" height="1" fill="#e3e3e3" />
<rect x="631" y="780" width="1" height="628" fill="#e3e3e3" />
<line x1="249.5" y1="1415.5" x2="265.5" y2="1415.5" stroke="#8a8a8a" stroke-width="1" />
<line x1="639.5" y1="1073" x2="639.5" y2="1090" stroke="#8a8a8a" stroke-width="1" />
<clipPath id="cl1"><path d="M122.7,975.7 L136.2,966.1 L149.8,963.0 L170.4,963.3 L235.0,969.3 L277.7,979.9 L331.8,994.2 L357.2,1007.7 L390.0,1026.8 L480.2,1080.8 L537.5,1116.6 L543.7,1123.8 L542.8,1129.1 L533.6,1136.5 L476.3,1179.5 L419.0,1211.7 L404.7,1213.5 L308.0,1197.4 L286.6,1188.4 L240.0,1157.2 L207.2,1139.7 L151.6,1096.8 L127.7,1077.7 L95.9,1042.7 L86.4,1030.0 L81.4,1023.4 L83.0,1018.6 L94.0,1005.9 L106.8,991.6 Z"/></clipPath>
<g clip-path="url(#cl1)">
<path d="M122.7,975.7 L136.2,966.1 L149.8,963.0 L170.4,963.3 L235.0,969.3 L277.7,979.9 L331.8,994.2 L357.2,1007.7 L390.0,1026.8 L480.2,1080.8 L537.5,1116.6 L543.7,1123.8 L542.8,1129.1 L533.6,1136.5 L476.3,1179.5 L419.0,1211.7 L404.7,1213.5 L308.0,1197.4 L286.6,1188.4 L240.0,1157.2 L207.2,1139.7 L151.6,1096.8 L127.7,1077.7 L95.9,1042.7 L86.4,1030.0 L81.4,1023.4 L83.0,1018.6 L94.0,1005.9 L106.8,991.6 Z" fill="#c3c3c3" />
<path d="M83.0,1018.6 L94.0,1005.9 L106.8,991.6 L122.7,975.7 L136.2,966.1 L138.6,967.7 L173.6,970.1 L202.2,978.9 L235.0,985.2 L180.0,983.0 L130.0,987.0 L103.0,1011.0 L95.0,1026.0 Z" fill="#b4b4b4" />
<path d="M136.2,966.1 L149.8,963.0 L170.4,963.3 L235.0,969.3 L277.7,979.9 L331.8,994.2 L357.2,1007.7 L390.0,1026.8 L480.2,1080.8 L537.5,1116.6 L543.7,1123.8 L535.7,1120.0 L476.6,1109.5 L415.8,1079.0 L380.0,1066.5 L315.9,1036.3 L241.0,987.0 L202.2,978.9 L173.6,970.1 L138.6,967.7 Z" fill="#7c7c7c" />
<path d="M149.8,963.0 L170.4,963.3 L235.0,969.3 L277.7,979.9 L331.8,994.2 L357.2,1007.7 L350.0,1009.0 L300.0,993.0 L240.0,979.0 L175.0,971.0 L140.0,967.0 Z" fill="#6f6f6f" />
<path d="M81.4,1023.4 L86.4,1030.0 L95.9,1042.7 L127.7,1077.7 L151.6,1096.8 L207.2,1139.7 L240.0,1157.2 L286.6,1188.4 L308.0,1197.4 L361.8,1205.0 L404.7,1213.5 L361.8,1193.8 L308.0,1176.0 L283.0,1147.3 L240.0,1125.4 L207.2,1106.3 L159.5,1077.7 L124.5,1053.9 L100.7,1030.0 L84.5,1023.4 Z" fill="#6b6b6b" />
<path d="M322.9,1076.7 L386.9,1086.4 L381.3,1099.0 L342.4,1115.7 L300.6,1154.6 L286.7,1149.1 L306.2,1115.7 Z" fill="#d2d2d2" />
<path d="M300.6,1154.6 L342.4,1115.7 L381.3,1099.0 L442.6,1122.6 L361.8,1190.8 L339.6,1182.5 Z" fill="#b3b3b3" />
<path d="M386.9,1086.4 L478.7,1111.5 L442.6,1122.6 L381.3,1099.0 Z" fill="#c6c6c6" />
<path d="M361.8,1190.8 L442.6,1122.6 L478.7,1111.5 L534.4,1119.8 L481.5,1171.3 L409.2,1211.7 Z" fill="#a1a1a1" />
<path d="M478.7,1111.5 L537.2,1119.8 L544.1,1124.0 L528.8,1136.5 L481.5,1171.3 L450.9,1143.5 Z" fill="#aaaaaa" />
<path d="M297.8,1151.8 L339.6,1182.5 L361.8,1190.8 L409.2,1211.7 L400.8,1213.6 L353.5,1204.7 L309.0,1176.9 Z" fill="#868686" />
<path d="M409.2,1211.7 L481.5,1171.3 L531.6,1132.9 L545.5,1124.0 L545.5,1143.5 L481.5,1188.0 L414.7,1221.4 Z" fill="#8e8e8e" />
</g>
<line x1="157.5" y1="780" x2="157.5" y2="1407" stroke="#383838" stroke-width="1" stroke-dasharray="1 3.7"/>
<line x1="483.5" y1="780" x2="483.5" y2="1407" stroke="#383838" stroke-width="1" stroke-dasharray="1 3.7"/>
<line x1="5" y1="932.5" x2="625" y2="932.5" stroke="#383838" stroke-width="1" stroke-dasharray="1 3.7"/>
<line x1="5" y1="1260.5" x2="625" y2="1260.5" stroke="#383838" stroke-width="1" stroke-dasharray="1 3.7"/>
<line x1="320" y1="820" x2="320" y2="1392" stroke="#000" stroke-width="2" stroke-dasharray="2 3.8"/>
<line x1="8" y1="1096" x2="607" y2="1096" stroke="#000" stroke-width="2" stroke-dasharray="2 3.8"/>
<path d="M617,926 L627.5,926 L627.5,1351" fill="none" stroke="#000" stroke-width="1.5" stroke-dasharray="4.5 2"/>
<circle cx="22.9" cy="1071.5" r="1.6" fill="#ff66cc"/>
<circle cx="61.7" cy="1062.5" r="1.6" fill="#ff66cc"/>
<circle cx="100.5" cy="1053.4" r="1.6" fill="#ff66cc"/>
<circle cx="139.3" cy="1044.3" r="1.6" fill="#ff66cc"/>
<circle cx="178.1" cy="1035.2" r="1.6" fill="#ff66cc"/>
<circle cx="255.7" cy="1017.1" r="1.6" fill="#ff66cc"/>
<circle cx="294.5" cy="1008.0" r="1.6" fill="#ff66cc"/>
<circle cx="333.3" cy="998.9" r="1.6" fill="#ff66cc"/>
<circle cx="372.1" cy="989.8" r="1.6" fill="#ff66cc"/>
<circle cx="410.9" cy="980.8" r="1.6" fill="#ff66cc"/>
<circle cx="449.7" cy="971.7" r="1.6" fill="#ff66cc"/>
<circle cx="488.5" cy="962.6" r="1.6" fill="#ff66cc"/>
<circle cx="527.3" cy="953.5" r="1.6" fill="#ff66cc"/>
<circle cx="566.1" cy="944.5" r="1.6" fill="#ff66cc"/>
<circle cx="604.9" cy="935.4" r="1.6" fill="#ff66cc"/>
<line x1="212.3" y1="1026.2" x2="222.3" y2="1026.2" stroke="#c040c0" stroke-width="1.2" transform="rotate(0 217.3 1026.2)"/>
<line x1="212.3" y1="1026.2" x2="222.3" y2="1026.2" stroke="#c040c0" stroke-width="1.2" transform="rotate(45 217.3 1026.2)"/>
<line x1="212.3" y1="1026.2" x2="222.3" y2="1026.2" stroke="#c040c0" stroke-width="1.2" transform="rotate(90 217.3 1026.2)"/>
<line x1="212.3" y1="1026.2" x2="222.3" y2="1026.2" stroke="#c040c0" stroke-width="1.2" transform="rotate(135 217.3 1026.2)"/>
<text x="219.4" y="1036.6" font-size="11.5" >3</text>
<g transform="translate(255.4,1031) rotate(3)"><ellipse cx="0" cy="0" rx="178.7" ry="61.7" fill="none" stroke="#ff2020" stroke-width="1.6" stroke-dasharray="3 9.5"/><ellipse cx="0" cy="0" rx="177.7" ry="60.7" fill="none" stroke="#c08a2a" stroke-width="1.15"/><line x1="-177.7" y1="0" x2="177.7" y2="0" stroke="#f5a623" stroke-width="1.5" stroke-dasharray="6 5"/><line x1="0" y1="-60.7" x2="0" y2="60.7" stroke="#f5a623" stroke-width="1.5" stroke-dasharray="6 5"/><circle cx="0" cy="0" r="2.5" fill="none" stroke="#000" stroke-width="1"/></g>
<circle cx="320" cy="1096" r="5" fill="none" stroke="#555" stroke-width="1.2"/>
<line x1="314" y1="1096" x2="326" y2="1096" stroke="#555" stroke-width="1.2" />
<line x1="320" y1="1090" x2="320" y2="1102" stroke="#555" stroke-width="1.2" />
<line x1="5" y1="1032.1" x2="76.4" y2="1015.3" stroke="#5a2ea0" stroke-width="1.3" />
<line x1="257.5" y1="972.7" x2="631" y2="884.9" stroke="#5a2ea0" stroke-width="1.3" />
<line x1="5" y1="1061.7" x2="88.2" y2="1042.1" stroke="#ff2020" stroke-width="1.3" />
<line x1="342.6" y1="982.3" x2="631" y2="914.5" stroke="#ff2020" stroke-width="1.3" />
<g transform="translate(76.4,1015.3) rotate(-13.2)"><rect x="-2.8" y="-2.5" width="5.6" height="5" fill="#22dd22"/><rect x="-2.8" y="-0.6" width="5.6" height="1.2" fill="#800080"/><rect x="-3.8" y="-3.5" width="2" height="7" fill="#800080"/><rect x="1.7999999999999998" y="-3.5" width="2" height="7" fill="#800080"/></g>
<g transform="translate(88.2,1042.1) rotate(-13.2)"><rect x="-2.8" y="-2.5" width="5.6" height="5" fill="#22dd22"/><rect x="-2.8" y="-0.6" width="5.6" height="1.2" fill="#800080"/><rect x="-3.8" y="-3.5" width="2" height="7" fill="#800080"/><rect x="1.7999999999999998" y="-3.5" width="2" height="7" fill="#800080"/></g>
<g transform="translate(257.5,972.7) rotate(-13.2)"><rect x="-2.5" y="-2.5" width="5.0" height="5" fill="#a020a0"/><rect x="-2.5" y="-0.6" width="5.0" height="1.2" fill="#800080"/><rect x="-3.5" y="-3.5" width="2" height="7" fill="#800080"/><rect x="1.5" y="-3.5" width="2" height="7" fill="#800080"/></g>
<g transform="translate(342.6,982.3) rotate(-13.2)"><rect x="-2.5" y="-2.5" width="5.0" height="5" fill="#a020a0"/><rect x="-2.5" y="-0.6" width="5.0" height="1.2" fill="#800080"/><rect x="-3.5" y="-3.5" width="2" height="7" fill="#800080"/><rect x="1.5" y="-3.5" width="2" height="7" fill="#800080"/></g>
<text x="78.8" y="1025.7" font-size="11.5" >1</text>
<text x="90.6" y="1052.5" font-size="11.5" >2</text>
<text x="259.9" y="983" font-size="11.5" >1</text>
<text x="345" y="992.6" font-size="11.5" >2</text>
<line x1="377" y1="959" x2="357.7" y2="1003.7" stroke="#808080" stroke-width="2.4" />
<text x="360" y="1002" font-size="12.5" font-weight="bold" fill="#2a2a2a" >S</text>
<line x1="270.3" y1="1214.8" x2="246" y2="1272.7" stroke="#808080" stroke-width="2.4" />
<text x="273" y="1226.3" font-size="12.5" font-weight="bold" fill="#2a2a2a" >N</text>
<text x="603" y="816.8" font-size="11.5" font-family='"Liberation Serif", serif' fill="#333" text-anchor="end" >(1746) Brouwer</text>
<text x="603" y="831.3" font-size="11.5" font-family='"Liberation Serif", serif' fill="#333" text-anchor="end" >DAMIT #937</text>
<text x="603" y="845.3" font-size="11.5" font-family='"Liberation Serif", serif' fill="#333" text-anchor="end" >Sky Plane</text>
<rect x="11" y="1090" width="20" height="22" fill="#fff" />
<text x="14.6" y="1109.7" font-size="22.5" textLength="14.6" lengthAdjust="spacingAndGlyphs" >E</text>
<text x="8.7" y="794.8" font-size="13.3" font-weight="bold" textLength="98.3" lengthAdjust="spacingAndGlyphs" >(1746) Brouwer</text>
<text x="113" y="794.8" font-size="13.3" font-weight="bold" textLength="72.2" lengthAdjust="spacingAndGlyphs" >2025 Jul 21</text>
<text x="197.5" y="794.8" font-size="13.3" font-weight="bold" textLength="166.8" lengthAdjust="spacingAndGlyphs" >108.8 x 36.4 km, PA 87.0°</text>
<text x="8.7" y="810.4" font-size="13.3" font-weight="bold" textLength="71.7" lengthAdjust="spacingAndGlyphs" >Geocentric</text>
<text x="86.8" y="810.4" font-size="13.3" font-weight="bold" textLength="10.2" lengthAdjust="spacingAndGlyphs" >X</text>
<text x="104" y="810.4" font-size="13.3" font-weight="bold" textLength="48" lengthAdjust="spacingAndGlyphs" >-1041.1</text>
<text x="160" y="810.4" font-size="13.3" font-weight="bold" textLength="78.7" lengthAdjust="spacingAndGlyphs" >Y 5728.8 km</text>
<text x="316" y="814.1" font-size="21.5" font-weight="bold" textLength="15.2" lengthAdjust="spacingAndGlyphs" >N</text>
<text transform="translate(612,1080) rotate(90)" x="0" y="0" font-size="15" font-family='"Liberation Serif", serif' textLength="41.7" lengthAdjust="spacingAndGlyphs">50 mas</text>
<path d="M129.5,1361 L129.5,1357.1 L510,1357.1 L510,1361" fill="none" stroke="#555" stroke-width="2" />
<line x1="151.6" y1="1352.5" x2="151.6" y2="1357" stroke="#555" stroke-width="2" />
<line x1="487.8" y1="1352.5" x2="487.8" y2="1357" stroke="#555" stroke-width="2" />
<text x="252.5" y="1368.5" font-size="11.5" font-family='"Liberation Serif", serif' fill="#8090a0" textLength="80" lengthAdjust="spacingAndGlyphs" >Mean diameter by</text>
<rect x="320" y="1358" width="136" height="12" fill="#fff" />
<text x="320.9" y="1368.9" font-size="12" font-family='"Liberation Serif", serif' textLength="133" lengthAdjust="spacingAndGlyphs" >(Volume) Mean dia = 103 km</text>
<path d="M130.2,1381.8 L130.2,1371.3 L510,1371.3 L510,1381.6" fill="none" stroke="#000" stroke-width="1" />
<line x1="151.6" y1="1361" x2="151.6" y2="1371.3" stroke="#000" stroke-width="1" />
<line x1="487.8" y1="1361" x2="487.8" y2="1371.3" stroke="#000" stroke-width="1" />
<rect x="186" y="1372" width="135" height="11" fill="#fff" />
<text x="188" y="1380" font-size="12" font-family='"Liberation Serif", serif' textLength="132" lengthAdjust="spacingAndGlyphs" >(Surface) Mean dia = 116 km</text>
<path d="M156.6,1377 L156.6,1391 L483,1391 L483,1377" fill="none" stroke="#000" stroke-width="1.5" stroke-dasharray="4.5 2"/>
<circle cx="19" cy="1368" r="5.3" fill="#ff0000"/>
<circle cx="19" cy="1382" r="5.3" fill="#228b22"/>
<text x="31" y="1373" font-size="15.5" font-family='"Liberation Serif", serif' textLength="63" lengthAdjust="spacingAndGlyphs" >Disappear</text>
<text x="31" y="1387" font-size="15.5" font-family='"Liberation Serif", serif' textLength="58" lengthAdjust="spacingAndGlyphs" >Reappear</text>
<text x="12" y="1402.5" font-size="10" font-family='"Liberation Serif", serif' textLength="73" lengthAdjust="spacingAndGlyphs" >Occult 4.2025.11.7</text>
<text x="116" y="1402.7" font-size="10" font-family='"Liberation Serif", serif' textLength="56" lengthAdjust="spacingAndGlyphs" >Phase offset 0°</text>
<rect x="301" y="1394.5" width="39" height="12" fill="#fff" />
<text x="303" y="1404" font-size="12" font-family='"Liberation Serif", serif' font-style="italic" textLength="35" lengthAdjust="spacingAndGlyphs" >100 km</text>
<text x="568" y="1393.6" font-size="12" font-family='"Liberation Serif", serif' textLength="52" lengthAdjust="spacingAndGlyphs" >50 km Grid</text>
<text x="523.3" y="1404.7" font-size="13" font-family='"Liberation Serif", serif' textLength="91" lengthAdjust="spacingAndGlyphs" >Plot width: 193 km</text>
<rect x="653.5" y="784.5" width="343" height="623" fill="none" stroke="#dcdcdc" stroke-width="1" />
<rect x="660" y="781" width="58" height="8" fill="#f0f0f0" />
<text x="662.4" y="789" font-size="12" textLength="53" lengthAdjust="spacingAndGlyphs" >Find best fit</text>
<rect x="662" y="796" width="32" height="32" fill="#8c8c8c" />
<rect x="662.5" y="796.5" width="30" height="30" fill="#ffffff" />
<rect x="664" y="798" width="29" height="29" fill="#808080" />
<rect x="664" y="798" width="27" height="27" fill="#c0c0c0" />
<rect x="667" y="803.9" width="1.2" height="1.2" fill="#000" />
<rect x="667" y="807.9" width="1.2" height="1.2" fill="#000" />
<rect x="667" y="811.9" width="1.2" height="1.2" fill="#000" />
<rect x="667" y="815.9" width="1.2" height="1.2" fill="#000" />
<rect x="667" y="819.9" width="1.2" height="1.2" fill="#000" />
<rect x="671.0" y="819.9" width="1.2" height="1.2" fill="#000" />
<rect x="675.0" y="819.9" width="1.2" height="1.2" fill="#000" />
<rect x="679.0" y="819.9" width="1.2" height="1.2" fill="#000" />
<rect x="683.0" y="819.9" width="1.2" height="1.2" fill="#000" />
<rect x="687.0" y="819.9" width="1.2" height="1.2" fill="#000" />
<path d="M672,816 L676,812 L680,816 L684,812 L688,808" fill="none" stroke="#000" stroke-width="1" />
<rect x="671" y="815" width="2" height="2" fill="#000" />
<rect x="675" y="811" width="2" height="2" fill="#000" />
<rect x="679" y="815" width="2" height="2" fill="#000" />
<rect x="683" y="811" width="2" height="2" fill="#000" />
<rect x="687" y="807" width="2" height="2" fill="#000" />
<text x="714.4" y="803.6" font-size="12" textLength="41.60000000000002" lengthAdjust="spacingAndGlyphs" >Center X</text>
<rect x="762.5" y="789.7" width="57" height="18" fill="#fff" stroke="#a6a6a6" stroke-width="1" />
<rect x="804.5" y="790.7" width="13" height="7.5" fill="#fff" stroke="#e0e0e0" stroke-width="1" />
<rect x="804.5" y="798.7" width="13" height="7.5" fill="#fff" stroke="#e0e0e0" stroke-width="1" />
<path d="M807.0,797.33 L810.5,793.83 L814.0,797.33 Z" fill="#000" />
<path d="M807.0,801.0 L810.5,804.5 L814.0,801.0 Z" fill="#000" />
<text x="765" y="801.7" font-size="12" >14.0</text>
<rect x="832.5" y="793.1" width="12" height="12" fill="#fbfbfb" stroke="#3c3c3c" stroke-width="1" rx="2.5" />
<text x="851" y="802.6" font-size="12" textLength="15" lengthAdjust="spacingAndGlyphs" >0.0</text>
<text x="714.4" y="825.6" font-size="12" textLength="41.60000000000002" lengthAdjust="spacingAndGlyphs" >Center Y</text>
<rect x="762.5" y="811.9" width="57" height="18" fill="#fff" stroke="#a6a6a6" stroke-width="1" />
<rect x="804.5" y="812.9" width="13" height="7.5" fill="#fff" stroke="#e0e0e0" stroke-width="1" />
<rect x="804.5" y="820.9" width="13" height="7.5" fill="#fff" stroke="#e0e0e0" stroke-width="1" />
<path d="M807.0,819.53 L810.5,816.03 L814.0,819.53 Z" fill="#000" />
<path d="M807.0,823.1999999999999 L810.5,826.6999999999999 L814.0,823.1999999999999 Z" fill="#000" />
<text x="765" y="823.9" font-size="12" >-7.2</text>
<rect x="832.5" y="815.3" width="12" height="12" fill="#fbfbfb" stroke="#3c3c3c" stroke-width="1" rx="2.5" />
<text x="851" y="824.8" font-size="12" textLength="15" lengthAdjust="spacingAndGlyphs" >0.0</text>
<text x="686.6" y="852.7" font-size="12" textLength="69.39999999999998" lengthAdjust="spacingAndGlyphs" >Major axis (km)</text>
<rect x="762.5" y="839.1" width="57" height="18" fill="#fff" stroke="#a6a6a6" stroke-width="1" />
<rect x="804.5" y="840.1" width="13" height="7.5" fill="#fff" stroke="#e0e0e0" stroke-width="1" />
<rect x="804.5" y="848.1" width="13" height="7.5" fill="#fff" stroke="#e0e0e0" stroke-width="1" />
<path d="M807.0,846.73 L810.5,843.23 L814.0,846.73 Z" fill="#000" />
<path d="M807.0,850.4 L810.5,853.9 L814.0,850.4 Z" fill="#000" />
<text x="765" y="851.1" font-size="12" >108.8</text>
<rect x="832.5" y="842.5" width="12" height="12" fill="#fbfbfb" stroke="#3c3c3c" stroke-width="1" rx="2.5" />
<text x="851" y="852.0" font-size="12" textLength="15" lengthAdjust="spacingAndGlyphs" >0.0</text>
<text x="686.6" y="874.4" font-size="12" textLength="69.39999999999998" lengthAdjust="spacingAndGlyphs" >Minor axis (km)</text>
<rect x="762.5" y="860.8" width="57" height="18" fill="#fff" stroke="#a6a6a6" stroke-width="1" />
<rect x="804.5" y="861.8" width="13" height="7.5" fill="#fff" stroke="#e0e0e0" stroke-width="1" />
<rect x="804.5" y="869.8" width="13" height="7.5" fill="#fff" stroke="#e0e0e0" stroke-width="1" />
<path d="M807.0,868.43 L810.5,864.93 L814.0,868.43 Z" fill="#000" />
<path d="M807.0,872.0999999999999 L810.5,875.5999999999999 L814.0,872.0999999999999 Z" fill="#000" />
<text x="765" y="872.8" font-size="12" >36.4</text>
<rect x="832.5" y="864.1999999999999" width="12" height="12" fill="#fbfbfb" stroke="#3c3c3c" stroke-width="1" rx="2.5" />
<text x="851" y="873.6999999999999" font-size="12" textLength="15" lengthAdjust="spacingAndGlyphs" >0.0</text>
<text x="705" y="896.2" font-size="12" textLength="51" lengthAdjust="spacingAndGlyphs" >Orientation</text>
<rect x="762.5" y="882.9" width="57" height="18" fill="#fff" stroke="#a6a6a6" stroke-width="1" />
<rect x="804.5" y="883.9" width="13" height="7.5" fill="#fff" stroke="#e0e0e0" stroke-width="1" />
<rect x="804.5" y="891.9" width="13" height="7.5" fill="#fff" stroke="#e0e0e0" stroke-width="1" />
<path d="M807.0,890.53 L810.5,887.03 L814.0,890.53 Z" fill="#000" />
<path d="M807.0,894.1999999999999 L810.5,897.6999999999999 L814.0,894.1999999999999 Z" fill="#000" />
<text x="765" y="894.9" font-size="12" >87.0</text>
<rect x="832.5" y="886.3" width="12" height="12" fill="#fbfbfb" stroke="#3c3c3c" stroke-width="1" rx="2.5" />
<text x="851" y="895.8" font-size="12" textLength="15" lengthAdjust="spacingAndGlyphs" >0.0</text>
<text x="893" y="803.6" font-size="12" textLength="35" lengthAdjust="spacingAndGlyphs" >Mass X</text>
<rect x="934.5" y="789.7" width="57" height="18" fill="#fff" stroke="#a6a6a6" stroke-width="1" />
<rect x="976.5" y="790.7" width="13" height="7.5" fill="#fff" stroke="#e0e0e0" stroke-width="1" />
<rect x="976.5" y="798.7" width="13" height="7.5" fill="#fff" stroke="#e0e0e0" stroke-width="1" />
<path d="M979.0,797.33 L982.5,793.83 L986.0,797.33 Z" fill="#000" />
<path d="M979.0,801.0 L982.5,804.5 L986.0,801.0 Z" fill="#000" />
<text x="937" y="801.7" font-size="12" >0.0</text>
<text x="893" y="825.6" font-size="12" textLength="35" lengthAdjust="spacingAndGlyphs" >Mass Y</text>
<rect x="934.5" y="811.9" width="57" height="18" fill="#fff" stroke="#a6a6a6" stroke-width="1" />
<rect x="976.5" y="812.9" width="13" height="7.5" fill="#fff" stroke="#e0e0e0" stroke-width="1" />
<rect x="976.5" y="820.9" width="13" height="7.5" fill="#fff" stroke="#e0e0e0" stroke-width="1" />
<path d="M979.0,819.53 L982.5,816.03 L986.0,819.53 Z" fill="#000" />
<path d="M979.0,823.1999999999999 L982.5,826.6999999999999 L986.0,823.1999999999999 Z" fill="#000" />
<text x="937" y="823.9" font-size="12" >0.0</text>
<text x="926" y="839" font-size="8.5" fill="#9a9a9a" textLength="44" lengthAdjust="spacingAndGlyphs" >Shape model</text>
<rect x="977.5" y="831.5" width="13" height="13" fill="#f7f7f7" stroke="#cfcfcf" stroke-width="1" rx="2.5" />
<text x="908" y="856" font-size="12" fill="#1a8a1a" textLength="63" lengthAdjust="spacingAndGlyphs" >dia = 62.9 km</text>
<text x="889" y="869" font-size="12" fill="#1c1cf0" textLength="102" lengthAdjust="spacingAndGlyphs" >a/b: 2.99, dMag: 1.19</text>
<text x="893" y="900" font-size="12" textLength="89" lengthAdjust="spacingAndGlyphs" >Motion: 12.20 km/s</text>
<rect x="830.5" y="901.5" width="16.5" height="6" fill="#fff" stroke="#d8d8d8" stroke-width="1" rx="3" />
<line x1="832.5" y1="905" x2="845" y2="905" stroke="#e00000" stroke-width="2" />
<rect x="666.5" y="912.5" width="12" height="12" fill="#fbfbfb" stroke="#3c3c3c" stroke-width="1" rx="2.5" />
<text x="684.7" y="922.6" font-size="12" textLength="35" lengthAdjust="spacingAndGlyphs" >Circular</text>
<rect x="732.5" y="912.5" width="12" height="12" fill="#fbfbfb" stroke="#3c3c3c" stroke-width="1" rx="2.5" />
<text x="751.4" y="916" font-size="11" textLength="61.6" lengthAdjust="spacingAndGlyphs" >Use assumed</text>
<text x="751.4" y="928.3" font-size="11" textLength="59.3" lengthAdjust="spacingAndGlyphs" >dia (62.9 km)</text>
<rect x="834.5" y="912.5" width="12" height="12" fill="#fbfbfb" stroke="#3c3c3c" stroke-width="1" rx="2.5" />
<text x="853" y="922" font-size="12" textLength="93" lengthAdjust="spacingAndGlyphs" >Include Miss events</text>
<rect x="664.5" y="938.5" width="321" height="20" fill="#f0f0f0" stroke="#fdfdfd" stroke-width="1" />
<path d="M665,958 L665,939 L985,939" fill="none" stroke="#6e6e6e" stroke-width="2" />
<text x="672.6" y="952.6" font-size="12" font-weight="bold" fill="#a8a8a8" textLength="110.7" lengthAdjust="spacingAndGlyphs" >Double stars - show</text>
<circle cx="804.3" cy="949.5" r="5" fill="none" stroke="#c8c8c8" stroke-width="3"/>
<circle cx="804.3" cy="949.5" r="2.2" fill="#fff"/>
<text x="816" y="954" font-size="10" fill="#a8a8a8" textLength="20" lengthAdjust="spacingAndGlyphs" >Both</text>
<circle cx="856.3" cy="949.5" r="5.5" fill="#fafafa" stroke="#cfcfcf" stroke-width="1"/>
<text x="868" y="954" font-size="10" fill="#a8a8a8" textLength="32" lengthAdjust="spacingAndGlyphs" >Primary</text>
<circle cx="921.3" cy="949.5" r="5.5" fill="#fafafa" stroke="#cfcfcf" stroke-width="1"/>
<text x="933" y="954" font-size="10" fill="#a8a8a8" textLength="44" lengthAdjust="spacingAndGlyphs" >Secondary</text>
<text x="664.6" y="980.4" font-size="12.5" font-weight="bold" fill="#107010" textLength="99.4" lengthAdjust="spacingAndGlyphs" >Quality of the fit</text>
<rect x="770.5" y="965.5" width="216" height="19.5" fill="#fff" stroke="#7a7a7a" stroke-width="1" />
<text x="773.5" y="979" font-size="12" textLength="129" lengthAdjust="spacingAndGlyphs" >Limits on size, but no shape</text>
<path d="M970,973 L974.5,977.5 L979,973" fill="none" stroke="#333" stroke-width="1" />
<text x="762.4" y="1000.6" font-size="12.5" font-weight="bold" fill="#8b0000" text-anchor="end" textLength="71.7" lengthAdjust="spacingAndGlyphs" >Review flags</text>
<rect x="770" y="987.5" width="216" height="19.5" fill="#e0ffff" />
<path d="M771,1007 L771,988.5 L986,988.5" fill="none" stroke="#555" stroke-width="2" />
<rect x="775.5" y="991.5" width="12" height="12" fill="#fbfbfb" stroke="#3c3c3c" stroke-width="1" rx="2.5" />
<text x="794" y="1000.6" font-size="12" textLength="157" lengthAdjust="spacingAndGlyphs" >0 items are tagged for review</text>
<rect x="655.5" y="1010" width="341.5" height="80.5" fill="#f0ffff" />
<path d="M656,1090.5 L656,1011 L997,1011" fill="none" stroke="#666" stroke-width="2" />
<line x1="655.5" y1="1091" x2="997" y2="1091" stroke="#fdfdfd" stroke-width="1" />
<text x="668" y="1035.7" font-size="12" font-weight="bold" fill="#7a0020" text-anchor="middle" >P</text>
<text x="668" y="1048.7" font-size="12" font-weight="bold" fill="#7a0020" text-anchor="middle" >L</text>
<text x="668" y="1061.6" font-size="12" font-weight="bold" fill="#7a0020" text-anchor="middle" >O</text>
<text x="668" y="1074.6" font-size="12" font-weight="bold" fill="#7a0020" text-anchor="middle" >T</text>
<text x="684" y="1032" font-size="12.5" font-weight="bold" fill="#6b0020" textLength="30" lengthAdjust="spacingAndGlyphs" >Scale</text>
<rect x="722" y="1018" width="269" height="19" fill="#fff8dc" />
<rect x="727.5" y="1024.5" width="258" height="3" fill="#e7e7e7" stroke="#d6d6d6" stroke-width="1" />
<line x1="730.5" y1="1032" x2="730.5" y2="1035" stroke="#a0a0a0" stroke-width="1" />
<line x1="742.5" y1="1032" x2="742.5" y2="1035" stroke="#a0a0a0" stroke-width="1" />
<line x1="754.5" y1="1032" x2="754.5" y2="1035" stroke="#a0a0a0" stroke-width="1" />
<line x1="766.5" y1="1032" x2="766.5" y2="1035" stroke="#a0a0a0" stroke-width="1" />
<line x1="778.5" y1="1032" x2="778.5" y2="1035" stroke="#a0a0a0" stroke-width="1" />
<line x1="790.5" y1="1032" x2="790.5" y2="1035" stroke="#a0a0a0" stroke-width="1" />
<line x1="802.5" y1="1032" x2="802.5" y2="1035" stroke="#a0a0a0" stroke-width="1" />
<line x1="814.5" y1="1032" x2="814.5" y2="1035" stroke="#a0a0a0" stroke-width="1" />
<line x1="826.5" y1="1032" x2="826.5" y2="1035" stroke="#a0a0a0" stroke-width="1" />
<line x1="838.5" y1="1032" x2="838.5" y2="1035" stroke="#a0a0a0" stroke-width="1" />
<line x1="850.5" y1="1032" x2="850.5" y2="1035" stroke="#a0a0a0" stroke-width="1" />
<line x1="862.5" y1="1032" x2="862.5" y2="1035" stroke="#a0a0a0" stroke-width="1" />
<line x1="874.5" y1="1032" x2="874.5" y2="1035" stroke="#a0a0a0" stroke-width="1" />
<line x1="886.5" y1="1032" x2="886.5" y2="1035" stroke="#a0a0a0" stroke-width="1" />
<line x1="898.5" y1="1032" x2="898.5" y2="1035" stroke="#a0a0a0" stroke-width="1" />
<line x1="910.5" y1="1032" x2="910.5" y2="1035" stroke="#a0a0a0" stroke-width="1" />
<line x1="922.5" y1="1032" x2="922.5" y2="1035" stroke="#a0a0a0" stroke-width="1" />
<line x1="934.5" y1="1032" x2="934.5" y2="1035" stroke="#a0a0a0" stroke-width="1" />
<line x1="946.5" y1="1032" x2="946.5" y2="1035" stroke="#a0a0a0" stroke-width="1" />
<line x1="958.5" y1="1032" x2="958.5" y2="1035" stroke="#a0a0a0" stroke-width="1" />
<line x1="970.5" y1="1032" x2="970.5" y2="1035" stroke="#a0a0a0" stroke-width="1" />
<line x1="982.5" y1="1032" x2="982.5" y2="1035" stroke="#a0a0a0" stroke-width="1" />
<path d="M837,1021 L843,1021 L843,1029 L840,1032 L837,1029 Z" fill="#0060c0" />
<text x="684" y="1059" font-size="12.5" font-weight="bold" fill="#6b0020" textLength="22" lengthAdjust="spacingAndGlyphs" >Size</text>
<rect x="713.5" y="1043.5" width="163" height="22" fill="#f5fff0" stroke="#e8e8e8" stroke-width="1" />
<path d="M714,1066 L714,1044 L876,1044" fill="none" stroke="#666" stroke-width="2" />
<circle cx="729.5" cy="1054.5" r="5" fill="#fff" stroke="#005fb8" stroke-width="3"/>
<text x="742" y="1059" font-size="12.5" font-weight="bold" fill="#6b0020" textLength="36" lengthAdjust="spacingAndGlyphs" >normal</text>
<circle cx="792.5" cy="1054.5" r="5.5" fill="#fafafa" stroke="#555" stroke-width="1"/>
<text x="806" y="1059" font-size="12.5" font-weight="bold" fill="#6b0020" textLength="17" lengthAdjust="spacingAndGlyphs" >x 2</text>
<circle cx="837.5" cy="1054.5" r="5.5" fill="#fafafa" stroke="#555" stroke-width="1"/>
<text x="850" y="1059" font-size="12.5" font-weight="bold" fill="#6b0020" textLength="18" lengthAdjust="spacingAndGlyphs" >x 5</text>
<text x="898" y="1059" font-size="12.5" font-weight="bold" fill="#8b008b" textLength="72" lengthAdjust="spacingAndGlyphs" >Form opacity</text>
<rect x="877" y="1065" width="114" height="21" fill="#fff8dc" />
<rect x="882.5" y="1071.5" width="103" height="3" fill="#e7e7e7" stroke="#d6d6d6" stroke-width="1" />
<line x1="885.5" y1="1081" x2="885.5" y2="1084" stroke="#a0a0a0" stroke-width="1" />
<line x1="895.5" y1="1081" x2="895.5" y2="1084" stroke="#a0a0a0" stroke-width="1" />
<line x1="904.5" y1="1081" x2="904.5" y2="1084" stroke="#a0a0a0" stroke-width="1" />
<line x1="914.5" y1="1081" x2="914.5" y2="1084" stroke="#a0a0a0" stroke-width="1" />
<line x1="924.5" y1="1081" x2="924.5" y2="1084" stroke="#a0a0a0" stroke-width="1" />
<line x1="934.5" y1="1081" x2="934.5" y2="1084" stroke="#a0a0a0" stroke-width="1" />
<line x1="943.5" y1="1081" x2="943.5" y2="1084" stroke="#a0a0a0" stroke-width="1" />
<line x1="953.5" y1="1081" x2="953.5" y2="1084" stroke="#a0a0a0" stroke-width="1" />
<line x1="963.5" y1="1081" x2="963.5" y2="1084" stroke="#a0a0a0" stroke-width="1" />
<line x1="972.5" y1="1081" x2="972.5" y2="1084" stroke="#a0a0a0" stroke-width="1" />
<line x1="982.5" y1="1081" x2="982.5" y2="1084" stroke="#a0a0a0" stroke-width="1" />
<path d="M976.5,1068 L982.5,1068 L982.5,1076 L979.5,1079 L976.5,1076 Z" fill="#0060c0" />
<text x="685" y="1084" font-size="12.5" font-weight="bold" fill="#6b0020" textLength="102" lengthAdjust="spacingAndGlyphs" >Scroll range x1.25</text>
<rect x="795.5" y="1073.5" width="12" height="12" fill="#fbfbfb" stroke="#3c3c3c" stroke-width="1" rx="2.5" />
<text x="669" y="1112" font-size="12" textLength="93" lengthAdjust="spacingAndGlyphs" >RMS fit 0.1 ±0.5 km</text>
<rect x="661" y="1123" width="326" height="268" fill="#fff" />
<path d="M662,1391 L662,1124 L987,1124" fill="none" stroke="#6a6a6a" stroke-width="2" />
<rect x="663" y="1374" width="324" height="16" fill="#f0f0f0" />
<line x1="680" y1="1382.5" x2="868" y2="1382.5" stroke="#858585" stroke-width="2" />
<line x1="986.5" y1="1123" x2="986.5" y2="1391" stroke="#e3e3e3" stroke-width="1" />
<line x1="661" y1="1390.5" x2="987" y2="1390.5" stroke="#e3e3e3" stroke-width="1" />
<line x1="668" y1="1131.5" x2="734" y2="1131.5" stroke="#4b0082" stroke-width="2" />
<line x1="668" y1="1143.5" x2="734" y2="1143.5" stroke="#ff0000" stroke-width="2" />
<circle cx="670" cy="1156" r="1.2" fill="#000"/>
<circle cx="685" cy="1156" r="1.2" fill="#000"/>
<circle cx="700" cy="1156" r="1.2" fill="#000"/>
<circle cx="715" cy="1156" r="1.2" fill="#000"/>
<circle cx="730" cy="1156" r="1.2" fill="#000"/>
<text x="757" y="1137" font-size="13.2" font-family='"Liberation Mono", monospace' >1</text>
<text x="798" y="1137" font-size="13.2" font-family='"Liberation Mono", monospace' textLength="180" lengthAdjust="spacingAndGlyphs" >Hideki Yoshihara, near</text>
<text x="757" y="1149" font-size="13.2" font-family='"Liberation Mono", monospace' >2</text>
<text x="798" y="1149" font-size="13.2" font-family='"Liberation Mono", monospace' textLength="188" lengthAdjust="spacingAndGlyphs" >Toshihiro Horikawa, nea</text>
<text x="757" y="1161" font-size="13.2" font-family='"Liberation Mono", monospace' textLength="32" lengthAdjust="spacingAndGlyphs" >3(P)</text>
<text x="798" y="1161" font-size="13.2" font-family='"Liberation Mono", monospace' textLength="72" lengthAdjust="spacingAndGlyphs" >Predicted</text>
<rect x="522.5" y="1226.5" width="449" height="131" fill="#b0c4de" stroke="#5a5a5a" stroke-width="1" />
<text x="525" y="1243" font-size="13" font-weight="bold" fill="#1f3a70" textLength="37" lengthAdjust="spacingAndGlyphs" >DAMIT</text>
<rect x="570.3" y="1232.4" width="11" height="13.5" fill="#00e000" stroke="#f4f4f4" stroke-width="1" rx="2.5" />
<text x="575.8" y="1242.9" font-size="11.5" text-anchor="middle" >1</text>
<rect x="587.9" y="1232.4" width="11" height="13.5" fill="#66c2a5" stroke="#f4f4f4" stroke-width="1" rx="2.5" />
<text x="593.4" y="1242.9" font-size="11.5" text-anchor="middle" >2</text>
<rect x="605.5" y="1232.4" width="12" height="13.5" fill="#e6e6e6" stroke="#f4f4f4" stroke-width="1" rx="2.5" />
<text x="611.5" y="1242.9" font-size="11.5" fill="#b8b8b8" text-anchor="middle" >3</text>
<rect x="623.5" y="1232.4" width="12" height="13.5" fill="#e6e6e6" stroke="#f4f4f4" stroke-width="1" rx="2.5" />
<text x="629.5" y="1242.9" font-size="11.5" fill="#b8b8b8" text-anchor="middle" >4</text>
<rect x="641.5" y="1232.4" width="12" height="13.5" fill="#e6e6e6" stroke="#f4f4f4" stroke-width="1" rx="2.5" />
<text x="647.5" y="1242.9" font-size="11.5" fill="#b8b8b8" text-anchor="middle" >5</text>
<rect x="659.1" y="1232.4" width="12" height="13.5" fill="#e6e6e6" stroke="#f4f4f4" stroke-width="1" rx="2.5" />
<text x="665.1" y="1242.9" font-size="11.5" fill="#b8b8b8" text-anchor="middle" >6</text>
<rect x="681.5" y="1231" width="68" height="16" fill="#b0eeee" stroke="#f4f4f4" stroke-width="1" rx="2" />
<text x="685.7" y="1243" font-size="12" textLength="56" lengthAdjust="spacingAndGlyphs" >Light curves</text>
<text x="757" y="1243" font-size="13" font-weight="bold" fill="#1f3a70" textLength="30" lengthAdjust="spacingAndGlyphs" >ISAM</text>
<rect x="793.5" y="1231.0" width="13" height="16" fill="#e6e6e6" stroke="#f4f4f4" stroke-width="1" rx="2.5" />
<text x="800.0" y="1244.0" font-size="11.5" fill="#b8b8b8" text-anchor="middle" >1</text>
<rect x="817.5" y="1231.0" width="13" height="16" fill="#e6e6e6" stroke="#f4f4f4" stroke-width="1" rx="2.5" />
<text x="824.0" y="1244.0" font-size="11.5" fill="#b8b8b8" text-anchor="middle" >2</text>
<rect x="841.5" y="1231.0" width="13" height="16" fill="#e6e6e6" stroke="#f4f4f4" stroke-width="1" rx="2.5" />
<text x="848.0" y="1244.0" font-size="11.5" fill="#b8b8b8" text-anchor="middle" >3</text>
<rect x="865.5" y="1231.0" width="13" height="16" fill="#e6e6e6" stroke="#f4f4f4" stroke-width="1" rx="2.5" />
<text x="872.0" y="1244.0" font-size="11.5" fill="#b8b8b8" text-anchor="middle" >4</text>
<rect x="889.5" y="1231.0" width="13" height="16" fill="#e6e6e6" stroke="#f4f4f4" stroke-width="1" rx="2.5" />
<text x="896.0" y="1244.0" font-size="11.5" fill="#b8b8b8" text-anchor="middle" >5</text>
<rect x="913.5" y="1231.0" width="13" height="16" fill="#e6e6e6" stroke="#f4f4f4" stroke-width="1" rx="2.5" />
<text x="920.0" y="1244.0" font-size="11.5" fill="#b8b8b8" text-anchor="middle" >6</text>
<rect x="938" y="1230.5" width="12.5" height="16.5" fill="#2020a0" stroke="#f0f0f0" stroke-width="1" />
<text x="944.3" y="1243.5" font-size="13" font-weight="bold" fill="#ffff00" text-anchor="middle" >?</text>
<rect x="954" y="1230.5" width="12.5" height="16.5" fill="#e01030" stroke="#f0f0f0" stroke-width="1" />
<text x="960.3" y="1243.5" font-size="12" font-weight="bold" fill="#fff" text-anchor="middle" >X</text>
<text x="530" y="1259.5" font-size="12" fill="#333" textLength="33" lengthAdjust="spacingAndGlyphs" >Source</text>
<text x="589.6" y="1259.5" font-size="12" fill="#333" textLength="9.7" lengthAdjust="spacingAndGlyphs" >ID</text>
<text x="623" y="1259.5" font-size="12" fill="#333" textLength="37.7" lengthAdjust="spacingAndGlyphs" >Surf/Vol</text>
<rect x="528.1" y="1264.8" width="37.799999999999955" height="16.5" fill="#efefef" stroke="#fdfdfd" stroke-width="1" />
<line x1="528.1" y1="1264.8" x2="565.9" y2="1264.8" stroke="#d8d8d8" stroke-width="1" />
<line x1="528.1" y1="1264.8" x2="528.1" y2="1281.3" stroke="#d8d8d8" stroke-width="1" />
<text x="530.1" y="1277.3" font-size="12" textLength="32" lengthAdjust="spacingAndGlyphs" >DAMIT</text>
<rect x="569.0" y="1264.8" width="51.700000000000045" height="16.5" fill="#efefef" stroke="#fdfdfd" stroke-width="1" />
<line x1="569.0" y1="1264.8" x2="620.7" y2="1264.8" stroke="#d8d8d8" stroke-width="1" />
<line x1="569.0" y1="1264.8" x2="569.0" y2="1281.3" stroke="#d8d8d8" stroke-width="1" />
<text x="571.0" y="1277.3" font-size="12" textLength="16" lengthAdjust="spacingAndGlyphs" >937</text>
<rect x="623.5" y="1264.8" width="37.200000000000045" height="16.5" fill="#efefef" stroke="#fdfdfd" stroke-width="1" />
<line x1="623.5" y1="1264.8" x2="660.7" y2="1264.8" stroke="#d8d8d8" stroke-width="1" />
<line x1="623.5" y1="1264.8" x2="623.5" y2="1281.3" stroke="#d8d8d8" stroke-width="1" />
<text x="625.5" y="1277.3" font-size="12" textLength="31" lengthAdjust="spacingAndGlyphs" >1.127</text>
<rect x="663.8" y="1250.3" width="301" height="47.4" fill="#fdf5d2" />
<path d="M664.3,1297.7 L664.3,1250.8 L964.7,1250.8" fill="none" stroke="#7a7a7a" stroke-width="1" />
<text x="687.5" y="1260" font-size="12" textLength="43" lengthAdjust="spacingAndGlyphs" >Fit quality</text>
<rect x="666.5" y="1265" width="96" height="19.5" fill="#fff" stroke="#7a7a7a" stroke-width="1" />
<text x="669" y="1279" font-size="12" textLength="74" lengthAdjust="spacingAndGlyphs" >Not constrained</text>
<path d="M749,1272.5 L753.5,1277 L758,1272.5" fill="none" stroke="#333" stroke-width="1" />
<text x="765" y="1260" font-size="12" textLength="40" lengthAdjust="spacingAndGlyphs" >Ph Corm</text>
<rect x="768.5" y="1265.5" width="36.5" height="17.5" fill="#efefef" stroke="#d0d0d0" stroke-width="1" />
<text x="770.5" y="1278" font-size="12" >0°</text>
<text x="816" y="1260" font-size="12" textLength="57" lengthAdjust="spacingAndGlyphs" >Minimum dia</text>
<rect x="814.5" y="1265.5" width="36.5" height="17.5" fill="#ffc0cb" stroke="#e0e0e0" stroke-width="1" />
<rect x="855.5" y="1265.5" width="28" height="21.5" fill="#99ff33" stroke="#f4f4f4" stroke-width="2" rx="2" />
<text x="860" y="1279.5" font-size="12" textLength="15" lengthAdjust="spacingAndGlyphs" >Set</text>
<text x="892" y="1261" font-size="12" textLength="60" lengthAdjust="spacingAndGlyphs" >Maximum dia</text>
<rect x="892.5" y="1265.5" width="36.5" height="17.5" fill="#ffc0cb" stroke="#e0e0e0" stroke-width="1" />
<rect x="932.5" y="1265.5" width="28.5" height="21.5" fill="#99ff33" stroke="#f4f4f4" stroke-width="2" rx="2" />
<text x="938" y="1279.5" font-size="12" textLength="15" lengthAdjust="spacingAndGlyphs" >Set</text>
<text x="668.6" y="1295" font-size="12" fill="#6a1b9a" textLength="74" lengthAdjust="spacingAndGlyphs" >Not constrained</text>
<text x="769" y="1295" font-size="12" fill="#6a1b9a" >0°</text>
<text x="815" y="1296" font-size="12" fill="#6a1b9a" >0</text>
<text x="893" y="1295" font-size="10" fill="#6a1b9a" textLength="22" lengthAdjust="spacingAndGlyphs" >- - - -</text>
<rect x="525.5" y="1283.5" width="33" height="20.5" fill="#ffff00" stroke="#333" stroke-width="1" />
<text x="542" y="1298.5" font-size="13" font-weight="bold" text-anchor="middle" >Dia</text>
<text x="562.4" y="1295" font-size="12" fill="#3a4a6a" font-style="italic" textLength="96" lengthAdjust="spacingAndGlyphs" >Values in memory =&gt;</text>
<text x="530.3" y="1315.4" font-size="12" fill="#333" textLength="53.7" lengthAdjust="spacingAndGlyphs" >Version info</text>
<rect x="590.5" y="1304" width="268.5" height="17.5" fill="#efefef" stroke="#fdfdfd" stroke-width="1" />
<line x1="590.5" y1="1304" x2="859" y2="1304" stroke="#d8d8d8" stroke-width="1" />
<text x="593.5" y="1317" font-size="12" textLength="53" lengthAdjust="spacingAndGlyphs" >2016-01-04</text>
<text x="529.5" y="1339.9" font-size="12" fill="#333" textLength="55" lengthAdjust="spacingAndGlyphs" >Image scale</text>
<rect x="591" y="1327.5" width="268.5" height="22" fill="#fff8dc" />
<rect x="596" y="1341.5" width="257.5" height="4" fill="#e7e7e7" stroke="#d6d6d6" stroke-width="1" />
<line x1="599.5" y1="1331.5" x2="599.5" y2="1334.5" stroke="#a0a0a0" stroke-width="1" />
<line x1="608.5" y1="1331.5" x2="608.5" y2="1334.5" stroke="#a0a0a0" stroke-width="1" />
<line x1="617.5" y1="1331.5" x2="617.5" y2="1334.5" stroke="#a0a0a0" stroke-width="1" />
<line x1="626.5" y1="1331.5" x2="626.5" y2="1334.5" stroke="#a0a0a0" stroke-width="1" />
<line x1="635.5" y1="1331.5" x2="635.5" y2="1334.5" stroke="#a0a0a0" stroke-width="1" />
<line x1="644.5" y1="1331.5" x2="644.5" y2="1334.5" stroke="#a0a0a0" stroke-width="1" />
<line x1="653.5" y1="1331.5" x2="653.5" y2="1334.5" stroke="#a0a0a0" stroke-width="1" />
<line x1="662.5" y1="1331.5" x2="662.5" y2="1334.5" stroke="#a0a0a0" stroke-width="1" />
<line x1="671.5" y1="1331.5" x2="671.5" y2="1334.5" stroke="#a0a0a0" stroke-width="1" />
<line x1="680.5" y1="1331.5" x2="680.5" y2="1334.5" stroke="#a0a0a0" stroke-width="1" />
<line x1="689.5" y1="1331.5" x2="689.5" y2="1334.5" stroke="#a0a0a0" stroke-width="1" />
<line x1="698.5" y1="1331.5" x2="698.5" y2="1334.5" stroke="#a0a0a0" stroke-width="1" />
<line x1="707.5" y1="1331.5" x2="707.5" y2="1334.5" stroke="#a0a0a0" stroke-width="1" />
<line x1="716.5" y1="1331.5" x2="716.5" y2="1334.5" stroke="#a0a0a0" stroke-width="1" />
<line x1="725.5" y1="1331.5" x2="725.5" y2="1334.5" stroke="#a0a0a0" stroke-width="1" />
<line x1="734.5" y1="1331.5" x2="734.5" y2="1334.5" stroke="#a0a0a0" stroke-width="1" />
<line x1="743.5" y1="1331.5" x2="743.5" y2="1334.5" stroke="#a0a0a0" stroke-width="1" />
<line x1="752.5" y1="1331.5" x2="752.5" y2="1334.5" stroke="#a0a0a0" stroke-width="1" />
<line x1="761.5" y1="1331.5" x2="761.5" y2="1334.5" stroke="#a0a0a0" stroke-width="1" />
<line x1="770.5" y1="1331.5" x2="770.5" y2="1334.5" stroke="#a0a0a0" stroke-width="1" />
<line x1="779.5" y1="1331.5" x2="779.5" y2="1334.5" stroke="#a0a0a0" stroke-width="1" />
<line x1="788.5" y1="1331.5" x2="788.5" y2="1334.5" stroke="#a0a0a0" stroke-width="1" />
<line x1="797.5" y1="1331.5" x2="797.5" y2="1334.5" stroke="#a0a0a0" stroke-width="1" />
<line x1="806.5" y1="1331.5" x2="806.5" y2="1334.5" stroke="#a0a0a0" stroke-width="1" />
<line x1="815.5" y1="1331.5" x2="815.5" y2="1334.5" stroke="#a0a0a0" stroke-width="1" />
<line x1="824.5" y1="1331.5" x2="824.5" y2="1334.5" stroke="#a0a0a0" stroke-width="1" />
<line x1="833.5" y1="1331.5" x2="833.5" y2="1334.5" stroke="#a0a0a0" stroke-width="1" />
<line x1="842.5" y1="1331.5" x2="842.5" y2="1334.5" stroke="#a0a0a0" stroke-width="1" />
<line x1="850.5" y1="1331.5" x2="850.5" y2="1334.5" stroke="#a0a0a0" stroke-width="1" />
<path d="M740.7,1345.5 L740.7,1340.5 L743.7,1336.5 L746.7,1340.5 L746.7,1345.5 Z" fill="#0060c0" />
<rect x="869.5" y="1308.5" width="95" height="43" fill="#ffc0cb" stroke="#f4f4f4" stroke-width="2" rx="3" />
<text x="881" y="1326" font-size="12.5" font-weight="bold" fill="#a00028" textLength="72.6" lengthAdjust="spacingAndGlyphs" >Save/update</text>
<text x="887.5" y="1339.3" font-size="12.5" font-weight="bold" fill="#a00028" textLength="58" lengthAdjust="spacingAndGlyphs" >model 937</text>
<rect x="0" y="1421.5" width="1006" height="13" fill="#fff" />
<rect x="2" y="1421" width="2.5" height="7" fill="#222" />
<rect x="0.5" y="1434.5" width="1005" height="701" fill="#f0f0f0" stroke="#9a9a9a" stroke-width="1" rx="8" />
<path d="M1,1443 Q1,1435 9,1435 L997,1435 Q1005,1435 1005,1443 L1005,1465 L1,1465 Z" fill="#f3f3f3"/>
<rect x="1" y="1465" width="1004" height="27" fill="url(#mg)" />
<rect x="9" y="1441" width="16" height="16" fill="#1a1208" />
<path d="M10.5,1451 C11,1448 13,1447 14.5,1446 C15.5,1444.5 17,1444 17.5,1445.5 C19,1445 21,1445.5 22.5,1447.5 C24,1449 24.5,1452 23.5,1454 C21.5,1453.5 19,1451.5 16.5,1452 C14.5,1452.3 12,1452.8 10.5,1451 Z" fill="#b8905e" />
<text x="30" y="1455.3" font-size="14.2" fill="#1a1a1a" textLength="277" lengthAdjust="spacingAndGlyphs" >Plot event observations : Occult v.4.2025.11.7</text>
<line x1="886" y1="1449.5" x2="897" y2="1449.5" stroke="#1a1a1a" stroke-width="1" />
<rect x="931.5" y="1444.5" width="10" height="10" fill="none" stroke="#1a1a1a" stroke-width="1" rx="1.5" />
<line x1="977" y1="1444" x2="987" y2="1454" stroke="#1a1a1a" stroke-width="1.1" />
<line x1="987" y1="1444" x2="977" y2="1454" stroke="#1a1a1a" stroke-width="1.1" />
<text x="17" y="1483.9" font-size="14" textLength="63" lengthAdjust="spacingAndGlyphs" >with Plot...</text>
<text x="102" y="1483.9" font-size="14" textLength="81" lengthAdjust="spacingAndGlyphs" >Plot options...</text>
<circle cx="207" cy="1480.5" r="7" fill="#2f6fe0" stroke="#1b4fb0" stroke-width="1"/>
<circle cx="205.5" cy="1478" r="3.5" fill="#9cc4ff" opacity=".6"/>
<text x="207" y="1485" font-size="11" font-weight="bold" fill="#fff" text-anchor="middle" >?</text>
<text x="219.5" y="1483.9" font-size="14" textLength="27" lengthAdjust="spacingAndGlyphs" >Help</text>
<line x1="219.5" y1="1486.5" x2="228" y2="1486.5" stroke="#000" stroke-width="1" />
<text x="270.4" y="1483.9" font-size="14" textLength="107.6" lengthAdjust="spacingAndGlyphs" >Keep form on top</text>
<line x1="270.5" y1="1486.5" x2="278.5" y2="1486.5" stroke="#000" stroke-width="1" />
<text x="399.5" y="1483.9" font-size="14" textLength="19.7" lengthAdjust="spacingAndGlyphs" >Exit</text>
<line x1="406" y1="1486.5" x2="412" y2="1486.5" stroke="#000" stroke-width="1" />
<rect x="427.5" y="1466.5" width="83" height="20" fill="#fdfdfd" stroke="#d0d0d0" stroke-width="1" rx="3" />
<text x="434" y="1480" font-size="10.5" textLength="68" lengthAdjust="spacingAndGlyphs" >Set 'Miss' Times</text>
<rect x="520.5" y="1466.5" width="58" height="21" fill="#fdfdfd" stroke="#d0d0d0" stroke-width="1" rx="3" />
<line x1="526" y1="1477.5" x2="535" y2="1477.5" stroke="#000" stroke-width="1.8" />
<path d="M532.5,1474.5 L536.5,1477.5 L532.5,1480.5" fill="none" stroke="#000" stroke-width="1.6" />
<text x="538.5" y="1482" font-size="13.3" font-weight="bold" textLength="33" lengthAdjust="spacingAndGlyphs" >Editor</text>
<rect x="586" y="1469" width="89" height="16" fill="#f0f0f0" />
<text x="589" y="1481.5" font-size="12" textLength="83" lengthAdjust="spacingAndGlyphs" >{Observer &amp; time}</text>
<line x1="0" y1="1434.5" x2="1006" y2="1434.5" stroke="#1f6fc0" stroke-width="1" />
<rect x="0" y="1462" width="1.5" height="26" fill="#30b0b8" />
<rect x="3" y="1492" width="631" height="632" fill="#ffffff" />
<rect x="3" y="1492" width="629" height="1" fill="#a0a0a0" />
<rect x="3" y="1492" width="1" height="630" fill="#a0a0a0" />
<rect x="4" y="1493" width="628" height="1" fill="#000" />
<rect x="4" y="1493" width="1" height="629" fill="#000" />
<rect x="5" y="2121" width="627" height="1" fill="#e3e3e3" />
<rect x="631" y="1494" width="1" height="628" fill="#e3e3e3" />
<line x1="297.5" y1="2129.5" x2="313.5" y2="2129.5" stroke="#8a8a8a" stroke-width="1" />
<line x1="639.5" y1="1787" x2="639.5" y2="1804" stroke="#8a8a8a" stroke-width="1" />
<clipPath id="cl2"><path d="M155.8,1787.4 L171.7,1773.4 L263.1,1735.7 L318.8,1705.8 L334.7,1701.9 L354.6,1699.9 L398.3,1701.9 L410.3,1707.8 L465.9,1747.6 L501.7,1779.4 L509.7,1789.3 L511.7,1799.3 L507.7,1813.2 L493.8,1827.1 L366.5,1866.9 L318.8,1894.7 L259.2,1910.6 L191.6,1922.5 L159.8,1922.5 L143.9,1914.6 L135.9,1902.7 L133.9,1878.8 L137.9,1847.0 L143.9,1815.2 L147.8,1803.3 Z"/></clipPath>
<g clip-path="url(#cl2)">
<path d="M155.8,1787.4 L171.7,1773.4 L263.1,1735.7 L318.8,1705.8 L334.7,1701.9 L354.6,1699.9 L398.3,1701.9 L410.3,1707.8 L465.9,1747.6 L501.7,1779.4 L509.7,1789.3 L511.7,1799.3 L507.7,1813.2 L493.8,1827.1 L366.5,1866.9 L318.8,1894.7 L259.2,1910.6 L191.6,1922.5 L159.8,1922.5 L143.9,1914.6 L135.9,1902.7 L133.9,1878.8 L137.9,1847.0 L143.9,1815.2 L147.8,1803.3 Z" fill="#c4c4c4" />
<path d="M147.8,1803.3 L155.8,1787.4 L171.7,1781.4 L179.6,1787.4 L219.4,1886.8 L217.4,1894.7 L159.8,1920.6 L143.9,1914.6 L135.9,1902.7 L133.9,1878.8 L137.9,1847.0 L143.9,1815.2 Z" fill="#939393" />
<path d="M179.6,1787.4 L267.1,1761.5 L251.2,1858.9 L219.4,1886.8 Z" fill="#a7a7a7" />
<path d="M267.1,1761.5 L287.0,1811.2 L251.2,1858.9 Z" fill="#b3b3b3" />
<path d="M155.8,1787.4 L171.7,1773.4 L263.1,1735.7 L318.8,1705.8 L334.7,1701.9 L354.6,1699.9 L330.7,1715.8 L263.1,1761.5 L179.6,1787.4 L171.7,1782.6 Z" fill="#767676" />
<path d="M354.6,1699.9 L398.3,1701.9 L410.3,1707.8 L465.9,1747.6 L501.7,1779.4 L509.7,1789.3 L511.7,1799.3 L508.5,1795.3 L483.4,1788.2 L464.3,1781.8 L435.3,1771.5 L397.5,1746.4 L351.8,1713.0 L330.7,1715.8 Z" fill="#7a7a7a" />
<path d="M458.0,1795.3 L511.7,1799.3 L507.7,1813.2 L493.8,1827.1 L469.9,1819.2 L461.9,1811.2 Z" fill="#949494" />
<path d="M263.1,1761.5 L330.7,1715.8 L362.5,1731.7 L458.0,1795.3 L461.9,1811.2 L398.3,1839.0 L334.7,1835.1 L287.0,1811.2 Z" fill="#c9c9c9" />
<path d="M326.8,1725.3 L351.8,1713.0 L397.5,1746.4 L435.3,1771.5 L464.3,1781.8 L439.3,1794.5 L358.6,1791.3 L328.7,1788.2 Z" fill="#b2b2b2" />
<path d="M267.1,1763.5 L326.8,1725.3 L328.7,1743.6 L291.0,1807.2 Z" fill="#d2d2d2" />
<path d="M287.0,1811.2 L334.7,1835.1 L398.3,1839.0 L342.7,1815.2 L306.9,1807.2 Z" fill="#d0d0d0" />
<path d="M219.4,1886.8 L251.2,1858.9 L298.9,1839.0 L398.3,1839.0 L461.9,1811.2 L493.8,1827.1 L366.5,1858.9 L318.8,1870.9 L219.4,1894.7 Z" fill="#9c9c9c" />
<path d="M217.4,1894.7 L318.8,1870.9 L366.5,1858.9 L493.8,1827.1 L366.5,1866.9 L318.8,1886.8 L211.5,1902.7 Z" fill="#8a8a8a" />
<path d="M159.8,1920.6 L211.5,1902.7 L318.8,1886.8 L366.5,1866.9 L493.8,1827.1 L366.5,1866.9 L318.8,1894.7 L259.2,1910.6 L191.6,1922.5 Z" fill="#707070" />
</g>
<line x1="148.5" y1="1494" x2="148.5" y2="2121" stroke="#383838" stroke-width="1" stroke-dasharray="1 3.7"/>
<line x1="492.5" y1="1494" x2="492.5" y2="2121" stroke="#383838" stroke-width="1" stroke-dasharray="1 3.7"/>
<line x1="5" y1="1638.5" x2="625" y2="1638.5" stroke="#383838" stroke-width="1" stroke-dasharray="1 3.7"/>
<line x1="5" y1="1982.5" x2="625" y2="1982.5" stroke="#383838" stroke-width="1" stroke-dasharray="1 3.7"/>
<line x1="320" y1="1534" x2="320" y2="2106" stroke="#000" stroke-width="2" stroke-dasharray="2 3.8"/>
<line x1="8" y1="1810" x2="607" y2="1810" stroke="#000" stroke-width="2" stroke-dasharray="2 3.8"/>
<path d="M617,1630.4 L628,1630.4 L628,1940" fill="none" stroke="#000" stroke-width="1.5" stroke-dasharray="4.5 2"/>
<circle cx="59.0" cy="1801.7" r="1.6" fill="#ff66cc"/>
<circle cx="100.0" cy="1792.1" r="1.6" fill="#ff66cc"/>
<circle cx="141.0" cy="1782.5" r="1.6" fill="#ff66cc"/>
<circle cx="182.0" cy="1772.9" r="1.6" fill="#ff66cc"/>
<circle cx="223.0" cy="1763.3" r="1.6" fill="#ff66cc"/>
<circle cx="264.0" cy="1753.7" r="1.6" fill="#ff66cc"/>
<circle cx="346.0" cy="1734.5" r="1.6" fill="#ff66cc"/>
<circle cx="387.0" cy="1724.9" r="1.6" fill="#ff66cc"/>
<circle cx="428.0" cy="1715.3" r="1.6" fill="#ff66cc"/>
<circle cx="469.0" cy="1705.7" r="1.6" fill="#ff66cc"/>
<circle cx="510.0" cy="1696.2" r="1.6" fill="#ff66cc"/>
<circle cx="551.0" cy="1686.6" r="1.6" fill="#ff66cc"/>
<circle cx="592.0" cy="1677.0" r="1.6" fill="#ff66cc"/>
<line x1="299.6" y1="1743.7" x2="309.6" y2="1743.7" stroke="#c040c0" stroke-width="1.2" transform="rotate(0 304.6 1743.7)"/>
<line x1="299.6" y1="1743.7" x2="309.6" y2="1743.7" stroke="#c040c0" stroke-width="1.2" transform="rotate(45 304.6 1743.7)"/>
<line x1="299.6" y1="1743.7" x2="309.6" y2="1743.7" stroke="#c040c0" stroke-width="1.2" transform="rotate(90 304.6 1743.7)"/>
<line x1="299.6" y1="1743.7" x2="309.6" y2="1743.7" stroke="#c040c0" stroke-width="1.2" transform="rotate(135 304.6 1743.7)"/>
<text x="307" y="1754.6" font-size="11.5" >3</text>
<g transform="translate(345.1,1749.5) rotate(3)"><ellipse cx="0" cy="0" rx="188.3" ry="65.2" fill="none" stroke="#ff2020" stroke-width="1.6" stroke-dasharray="3 9.5"/><ellipse cx="0" cy="0" rx="187.3" ry="64.2" fill="none" stroke="#c08a2a" stroke-width="1.15"/><line x1="-187.3" y1="0" x2="187.3" y2="0" stroke="#f5a623" stroke-width="1.5" stroke-dasharray="6 5"/><line x1="0" y1="-64.2" x2="0" y2="64.2" stroke="#f5a623" stroke-width="1.5" stroke-dasharray="6 5"/><circle cx="0" cy="0" r="2.5" fill="none" stroke="#000" stroke-width="1"/></g>
<circle cx="320" cy="1808.7" r="5" fill="none" stroke="#555" stroke-width="1.2"/>
<line x1="314" y1="1808.7" x2="326" y2="1808.7" stroke="#555" stroke-width="1.2" />
<line x1="320" y1="1802.7" x2="320" y2="1814.7" stroke="#555" stroke-width="1.2" />
<line x1="5" y1="1768.4" x2="156.4" y2="1732.8" stroke="#5a2ea0" stroke-width="1.3" />
<line x1="346.7" y1="1687.1" x2="631" y2="1620.3" stroke="#5a2ea0" stroke-width="1.3" />
<line x1="5" y1="1799.8" x2="169.2" y2="1761.2" stroke="#ff2020" stroke-width="1.3" />
<line x1="437.3" y1="1698.4" x2="624.3" y2="1654.4" stroke="#ff2020" stroke-width="1.3" />
<g transform="translate(156.4,1732.8) rotate(-13.2)"><rect x="-2.8" y="-2.5" width="5.6" height="5" fill="#22dd22"/><rect x="-2.8" y="-0.6" width="5.6" height="1.2" fill="#800080"/><rect x="-3.8" y="-3.5" width="2" height="7" fill="#800080"/><rect x="1.7999999999999998" y="-3.5" width="2" height="7" fill="#800080"/></g>
<g transform="translate(169.2,1761.2) rotate(-13.2)"><rect x="-2.8" y="-2.5" width="5.6" height="5" fill="#22dd22"/><rect x="-2.8" y="-0.6" width="5.6" height="1.2" fill="#800080"/><rect x="-3.8" y="-3.5" width="2" height="7" fill="#800080"/><rect x="1.7999999999999998" y="-3.5" width="2" height="7" fill="#800080"/></g>
<g transform="translate(346.7,1687.1) rotate(-13.2)"><rect x="-2.5" y="-2.5" width="5.0" height="5" fill="#a020a0"/><rect x="-2.5" y="-0.6" width="5.0" height="1.2" fill="#800080"/><rect x="-3.5" y="-3.5" width="2" height="7" fill="#800080"/><rect x="1.5" y="-3.5" width="2" height="7" fill="#800080"/></g>
<g transform="translate(437.3,1698.4) rotate(-13.2)"><rect x="-2.5" y="-2.5" width="5.0" height="5" fill="#a020a0"/><rect x="-2.5" y="-0.6" width="5.0" height="1.2" fill="#800080"/><rect x="-3.5" y="-3.5" width="2" height="7" fill="#800080"/><rect x="1.5" y="-3.5" width="2" height="7" fill="#800080"/></g>
<text x="158.8" y="1742.7" font-size="11.5" >1</text>
<text x="171.2" y="1771.5" font-size="11.5" >2</text>
<text x="349.5" y="1697.5" font-size="11.5" >1</text>
<text x="439.9" y="1707.7" font-size="11.5" >2</text>
<line x1="278" y1="1668" x2="291.4" y2="1714.9" stroke="#808080" stroke-width="2.4" />
<text x="294" y="1713.3" font-size="12.5" font-weight="bold" fill="#2a2a2a" >S</text>
<line x1="345" y1="1895" x2="357.5" y2="1935" stroke="#808080" stroke-width="2.4" />
<text x="346.8" y="1904.2" font-size="12.5" font-weight="bold" fill="#2a2a2a" >N</text>
<text x="544" y="1589" font-size="11.5" font-family='"Liberation Serif", serif' fill="#333" text-anchor="end" >(1746) Brouwer</text>
<text x="544" y="1603.5" font-size="11.5" font-family='"Liberation Serif", serif' fill="#333" text-anchor="end" >DAMIT #938</text>
<text x="544" y="1617.5" font-size="11.5" font-family='"Liberation Serif", serif' fill="#333" text-anchor="end" >Sky Plane</text>
<rect x="11" y="1804" width="20" height="22" fill="#fff" />
<text x="14.6" y="1823.7" font-size="22.5" textLength="14.6" lengthAdjust="spacingAndGlyphs" >E</text>
<text x="8.7" y="1508.8" font-size="13.3" font-weight="bold" textLength="98.3" lengthAdjust="spacingAndGlyphs" >(1746) Brouwer</text>
<text x="113" y="1508.8" font-size="13.3" font-weight="bold" textLength="72.2" lengthAdjust="spacingAndGlyphs" >2025 Jul 21</text>
<text x="197.5" y="1508.8" font-size="13.3" font-weight="bold" textLength="166.8" lengthAdjust="spacingAndGlyphs" >108.8 x 36.4 km, PA 87.0°</text>
<text x="8.7" y="1524.4" font-size="13.3" font-weight="bold" textLength="71.7" lengthAdjust="spacingAndGlyphs" >Geocentric</text>
<text x="86.8" y="1524.4" font-size="13.3" font-weight="bold" textLength="10.2" lengthAdjust="spacingAndGlyphs" >X</text>
<text x="104" y="1524.4" font-size="13.3" font-weight="bold" textLength="48" lengthAdjust="spacingAndGlyphs" >-1041.1</text>
<text x="160" y="1524.4" font-size="13.3" font-weight="bold" textLength="78.7" lengthAdjust="spacingAndGlyphs" >Y 5728.8 km</text>
<text x="316" y="1528.1" font-size="21.5" font-weight="bold" textLength="15.2" lengthAdjust="spacingAndGlyphs" >N</text>
<text transform="translate(612,1794) rotate(90)" x="0" y="0" font-size="15" font-family='"Liberation Serif", serif' textLength="41.7" lengthAdjust="spacingAndGlyphs">50 mas</text>
<path d="M162,2015.5 L162,2011.7 L477,2011.7 L477,2015.5" fill="none" stroke="#444" stroke-width="2" />
<line x1="174" y1="2006.5" x2="174" y2="2011.7" stroke="#444" stroke-width="1.5" />
<line x1="465.5" y1="2006.5" x2="465.5" y2="2011.7" stroke="#444" stroke-width="1.5" />
<text x="252.5" y="2024" font-size="11.5" font-family='"Liberation Serif", serif' fill="#555" textLength="138" lengthAdjust="spacingAndGlyphs" >Mean diameter by: Vol↑ Surf↓</text>
<line x1="174" y1="2076" x2="174" y2="2085.4" stroke="#000" stroke-width="1" />
<line x1="465.5" y1="2076" x2="465.5" y2="2085.4" stroke="#000" stroke-width="1" />
<text x="320.9" y="2082" font-size="12" font-family='"Liberation Serif", serif' textLength="135" lengthAdjust="spacingAndGlyphs" >(Volume) Mean dia = 84.4 km</text>
<path d="M162,2095.5 L162,2085.4 L477,2085.4 L477,2095.5" fill="none" stroke="#000" stroke-width="1" />
<rect x="184" y="2086" width="137" height="11" fill="#fff" />
<text x="185" y="2095" font-size="12" font-family='"Liberation Serif", serif' textLength="135" lengthAdjust="spacingAndGlyphs" >(Surface) Mean dia = 91.4 km</text>
<path d="M148,2080 L148,2104.5 L492.3,2104.5 L492.3,2080" fill="none" stroke="#000" stroke-width="1.5" stroke-dasharray="4.5 2"/>
<circle cx="19" cy="2082" r="5.3" fill="#ff0000"/>
<circle cx="19" cy="2096" r="5.3" fill="#228b22"/>
<text x="31" y="2087" font-size="15.5" font-family='"Liberation Serif", serif' textLength="63" lengthAdjust="spacingAndGlyphs" >Disappear</text>
<text x="31" y="2101" font-size="15.5" font-family='"Liberation Serif", serif' textLength="58" lengthAdjust="spacingAndGlyphs" >Reappear</text>
<text x="12" y="2116.5" font-size="10" font-family='"Liberation Serif", serif' textLength="73" lengthAdjust="spacingAndGlyphs" >Occult 4.2025.11.7</text>
<text x="116" y="2116.7" font-size="10" font-family='"Liberation Serif", serif' textLength="56" lengthAdjust="spacingAndGlyphs" >Phase offset 0°</text>
<rect x="301" y="2108.5" width="39" height="12" fill="#fff" />
<text x="303" y="2118" font-size="12" font-family='"Liberation Serif", serif' font-style="italic" textLength="35" lengthAdjust="spacingAndGlyphs" >100 km</text>
<text x="568" y="2107.6" font-size="12" font-family='"Liberation Serif", serif' textLength="52" lengthAdjust="spacingAndGlyphs" >50 km Grid</text>
<text x="523.3" y="2118.7" font-size="13" font-family='"Liberation Serif", serif' textLength="91" lengthAdjust="spacingAndGlyphs" >Plot width: 183 km</text>
<rect x="653.5" y="1498.5" width="343" height="623" fill="none" stroke="#dcdcdc" stroke-width="1" />
<rect x="660" y="1495" width="58" height="8" fill="#f0f0f0" />
<text x="662.4" y="1503" font-size="12" textLength="53" lengthAdjust="spacingAndGlyphs" >Find best fit</text>
<rect x="662" y="1510" width="32" height="32" fill="#8c8c8c" />
<rect x="662.5" y="1510.5" width="30" height="30" fill="#ffffff" />
<rect x="664" y="1512" width="29" height="29" fill="#808080" />
<rect x="664" y="1512" width="27" height="27" fill="#c0c0c0" />
<rect x="667" y="1517.9" width="1.2" height="1.2" fill="#000" />
<rect x="667" y="1521.9" width="1.2" height="1.2" fill="#000" />
<rect x="667" y="1525.9" width="1.2" height="1.2" fill="#000" />
<rect x="667" y="1529.9" width="1.2" height="1.2" fill="#000" />
<rect x="667" y="1533.9" width="1.2" height="1.2" fill="#000" />
<rect x="671.0" y="1533.9" width="1.2" height="1.2" fill="#000" />
<rect x="675.0" y="1533.9" width="1.2" height="1.2" fill="#000" />
<rect x="679.0" y="1533.9" width="1.2" height="1.2" fill="#000" />
<rect x="683.0" y="1533.9" width="1.2" height="1.2" fill="#000" />
<rect x="687.0" y="1533.9" width="1.2" height="1.2" fill="#000" />
<path d="M672,1530 L676,1526 L680,1530 L684,1526 L688,1522" fill="none" stroke="#000" stroke-width="1" />
<rect x="671" y="1529" width="2" height="2" fill="#000" />
<rect x="675" y="1525" width="2" height="2" fill="#000" />
<rect x="679" y="1529" width="2" height="2" fill="#000" />
<rect x="683" y="1525" width="2" height="2" fill="#000" />
<rect x="687" y="1521" width="2" height="2" fill="#000" />
<text x="714.4" y="1517.6" font-size="12" textLength="41.60000000000002" lengthAdjust="spacingAndGlyphs" >Center X</text>
<rect x="762.5" y="1503.7" width="57" height="18" fill="#fff" stroke="#a6a6a6" stroke-width="1" />
<rect x="804.5" y="1504.7" width="13" height="7.5" fill="#fff" stroke="#e0e0e0" stroke-width="1" />
<rect x="804.5" y="1512.7" width="13" height="7.5" fill="#fff" stroke="#e0e0e0" stroke-width="1" />
<path d="M807.0,1511.3300000000002 L810.5,1507.8300000000002 L814.0,1511.3300000000002 Z" fill="#000" />
<path d="M807.0,1515.0 L810.5,1518.5 L814.0,1515.0 Z" fill="#000" />
<text x="765" y="1515.7" font-size="12" >14.0</text>
<rect x="832.5" y="1507.1000000000001" width="12" height="12" fill="#fbfbfb" stroke="#3c3c3c" stroke-width="1" rx="2.5" />
<text x="851" y="1516.6000000000001" font-size="12" textLength="15" lengthAdjust="spacingAndGlyphs" >0.0</text>
<text x="714.4" y="1539.6" font-size="12" textLength="41.60000000000002" lengthAdjust="spacingAndGlyphs" >Center Y</text>
<rect x="762.5" y="1525.9" width="57" height="18" fill="#fff" stroke="#a6a6a6" stroke-width="1" />
<rect x="804.5" y="1526.9" width="13" height="7.5" fill="#fff" stroke="#e0e0e0" stroke-width="1" />
<rect x="804.5" y="1534.9" width="13" height="7.5" fill="#fff" stroke="#e0e0e0" stroke-width="1" />
<path d="M807.0,1533.5300000000002 L810.5,1530.0300000000002 L814.0,1533.5300000000002 Z" fill="#000" />
<path d="M807.0,1537.2 L810.5,1540.7 L814.0,1537.2 Z" fill="#000" />
<text x="765" y="1537.9" font-size="12" >-7.2</text>
<rect x="832.5" y="1529.3000000000002" width="12" height="12" fill="#fbfbfb" stroke="#3c3c3c" stroke-width="1" rx="2.5" />
<text x="851" y="1538.8000000000002" font-size="12" textLength="15" lengthAdjust="spacingAndGlyphs" >0.0</text>
<text x="686.6" y="1566.7" font-size="12" textLength="69.39999999999998" lengthAdjust="spacingAndGlyphs" >Major axis (km)</text>
<rect x="762.5" y="1553.1" width="57" height="18" fill="#fff" stroke="#a6a6a6" stroke-width="1" />
<rect x="804.5" y="1554.1" width="13" height="7.5" fill="#fff" stroke="#e0e0e0" stroke-width="1" />
<rect x="804.5" y="1562.1" width="13" height="7.5" fill="#fff" stroke="#e0e0e0" stroke-width="1" />
<path d="M807.0,1560.73 L810.5,1557.23 L814.0,1560.73 Z" fill="#000" />
<path d="M807.0,1564.3999999999999 L810.5,1567.8999999999999 L814.0,1564.3999999999999 Z" fill="#000" />
<text x="765" y="1565.1" font-size="12" >108.8</text>
<rect x="832.5" y="1556.5" width="12" height="12" fill="#fbfbfb" stroke="#3c3c3c" stroke-width="1" rx="2.5" />
<text x="851" y="1566.0" font-size="12" textLength="15" lengthAdjust="spacingAndGlyphs" >0.0</text>
<text x="686.6" y="1588.4" font-size="12" textLength="69.39999999999998" lengthAdjust="spacingAndGlyphs" >Minor axis (km)</text>
<rect x="762.5" y="1574.8" width="57" height="18" fill="#fff" stroke="#a6a6a6" stroke-width="1" />
<rect x="804.5" y="1575.8" width="13" height="7.5" fill="#fff" stroke="#e0e0e0" stroke-width="1" />
<rect x="804.5" y="1583.8" width="13" height="7.5" fill="#fff" stroke="#e0e0e0" stroke-width="1" />
<path d="M807.0,1582.43 L810.5,1578.93 L814.0,1582.43 Z" fill="#000" />
<path d="M807.0,1586.1 L810.5,1589.6 L814.0,1586.1 Z" fill="#000" />
<text x="765" y="1586.8" font-size="12" >36.4</text>
<rect x="832.5" y="1578.2" width="12" height="12" fill="#fbfbfb" stroke="#3c3c3c" stroke-width="1" rx="2.5" />
<text x="851" y="1587.7" font-size="12" textLength="15" lengthAdjust="spacingAndGlyphs" >0.0</text>
<text x="705" y="1610.2" font-size="12" textLength="51" lengthAdjust="spacingAndGlyphs" >Orientation</text>
<rect x="762.5" y="1596.9" width="57" height="18" fill="#fff" stroke="#a6a6a6" stroke-width="1" />
<rect x="804.5" y="1597.9" width="13" height="7.5" fill="#fff" stroke="#e0e0e0" stroke-width="1" />
<rect x="804.5" y="1605.9" width="13" height="7.5" fill="#fff" stroke="#e0e0e0" stroke-width="1" />
<path d="M807.0,1604.5300000000002 L810.5,1601.0300000000002 L814.0,1604.5300000000002 Z" fill="#000" />
<path d="M807.0,1608.2 L810.5,1611.7 L814.0,1608.2 Z" fill="#000" />
<text x="765" y="1608.9" font-size="12" >87.0</text>
<rect x="832.5" y="1600.3000000000002" width="12" height="12" fill="#fbfbfb" stroke="#3c3c3c" stroke-width="1" rx="2.5" />
<text x="851" y="1609.8000000000002" font-size="12" textLength="15" lengthAdjust="spacingAndGlyphs" >0.0</text>
<text x="893" y="1517.6" font-size="12" textLength="35" lengthAdjust="spacingAndGlyphs" >Mass X</text>
<rect x="934.5" y="1503.7" width="57" height="18" fill="#fff" stroke="#a6a6a6" stroke-width="1" />
<rect x="976.5" y="1504.7" width="13" height="7.5" fill="#fff" stroke="#e0e0e0" stroke-width="1" />
<rect x="976.5" y="1512.7" width="13" height="7.5" fill="#fff" stroke="#e0e0e0" stroke-width="1" />
<path d="M979.0,1511.3300000000002 L982.5,1507.8300000000002 L986.0,1511.3300000000002 Z" fill="#000" />
<path d="M979.0,1515.0 L982.5,1518.5 L986.0,1515.0 Z" fill="#000" />
<text x="937" y="1515.7" font-size="12" >0.0</text>
<text x="893" y="1539.6" font-size="12" textLength="35" lengthAdjust="spacingAndGlyphs" >Mass Y</text>
<rect x="934.5" y="1525.9" width="57" height="18" fill="#fff" stroke="#a6a6a6" stroke-width="1" />
<rect x="976.5" y="1526.9" width="13" height="7.5" fill="#fff" stroke="#e0e0e0" stroke-width="1" />
<rect x="976.5" y="1534.9" width="13" height="7.5" fill="#fff" stroke="#e0e0e0" stroke-width="1" />
<path d="M979.0,1533.5300000000002 L982.5,1530.0300000000002 L986.0,1533.5300000000002 Z" fill="#000" />
<path d="M979.0,1537.2 L982.5,1540.7 L986.0,1537.2 Z" fill="#000" />
<text x="937" y="1537.9" font-size="12" >0.0</text>
<text x="926" y="1553" font-size="8.5" fill="#9a9a9a" textLength="44" lengthAdjust="spacingAndGlyphs" >Shape model</text>
<rect x="977.5" y="1545.5" width="13" height="13" fill="#f7f7f7" stroke="#cfcfcf" stroke-width="1" rx="2.5" />
<text x="908" y="1570" font-size="12" fill="#1a8a1a" textLength="63" lengthAdjust="spacingAndGlyphs" >dia = 62.9 km</text>
<text x="889" y="1583" font-size="12" fill="#1c1cf0" textLength="102" lengthAdjust="spacingAndGlyphs" >a/b: 2.99, dMag: 1.19</text>
<text x="893" y="1614" font-size="12" textLength="89" lengthAdjust="spacingAndGlyphs" >Motion: 12.20 km/s</text>
<rect x="830.5" y="1615.5" width="16.5" height="6" fill="#fff" stroke="#d8d8d8" stroke-width="1" rx="3" />
<line x1="832.5" y1="1619" x2="845" y2="1619" stroke="#e00000" stroke-width="2" />
<rect x="666.5" y="1626.5" width="12" height="12" fill="#fbfbfb" stroke="#3c3c3c" stroke-width="1" rx="2.5" />
<text x="684.7" y="1636.6" font-size="12" textLength="35" lengthAdjust="spacingAndGlyphs" >Circular</text>
<rect x="732.5" y="1626.5" width="12" height="12" fill="#fbfbfb" stroke="#3c3c3c" stroke-width="1" rx="2.5" />
<text x="751.4" y="1630" font-size="11" textLength="61.6" lengthAdjust="spacingAndGlyphs" >Use assumed</text>
<text x="751.4" y="1642.3" font-size="11" textLength="59.3" lengthAdjust="spacingAndGlyphs" >dia (62.9 km)</text>
<rect x="834.5" y="1626.5" width="12" height="12" fill="#fbfbfb" stroke="#3c3c3c" stroke-width="1" rx="2.5" />
<text x="853" y="1636" font-size="12" textLength="93" lengthAdjust="spacingAndGlyphs" >Include Miss events</text>
<rect x="664.5" y="1652.5" width="321" height="20" fill="#f0f0f0" stroke="#fdfdfd" stroke-width="1" />
<path d="M665,1672 L665,1653 L985,1653" fill="none" stroke="#6e6e6e" stroke-width="2" />
<text x="672.6" y="1666.6" font-size="12" font-weight="bold" fill="#a8a8a8" textLength="110.7" lengthAdjust="spacingAndGlyphs" >Double stars - show</text>
<circle cx="804.3" cy="1663.5" r="5" fill="none" stroke="#c8c8c8" stroke-width="3"/>
<circle cx="804.3" cy="1663.5" r="2.2" fill="#fff"/>
<text x="816" y="1668" font-size="10" fill="#a8a8a8" textLength="20" lengthAdjust="spacingAndGlyphs" >Both</text>
<circle cx="856.3" cy="1663.5" r="5.5" fill="#fafafa" stroke="#cfcfcf" stroke-width="1"/>
<text x="868" y="1668" font-size="10" fill="#a8a8a8" textLength="32" lengthAdjust="spacingAndGlyphs" >Primary</text>
<circle cx="921.3" cy="1663.5" r="5.5" fill="#fafafa" stroke="#cfcfcf" stroke-width="1"/>
<text x="933" y="1668" font-size="10" fill="#a8a8a8" textLength="44" lengthAdjust="spacingAndGlyphs" >Secondary</text>
<text x="664.6" y="1694.4" font-size="12.5" font-weight="bold" fill="#107010" textLength="99.4" lengthAdjust="spacingAndGlyphs" >Quality of the fit</text>
<rect x="770.5" y="1679.5" width="216" height="19.5" fill="#fff" stroke="#7a7a7a" stroke-width="1" />
<text x="773.5" y="1693" font-size="12" textLength="129" lengthAdjust="spacingAndGlyphs" >Limits on size, but no shape</text>
<path d="M970,1687 L974.5,1691.5 L979,1687" fill="none" stroke="#333" stroke-width="1" />
<text x="762.4" y="1714.6" font-size="12.5" font-weight="bold" fill="#8b0000" text-anchor="end" textLength="71.7" lengthAdjust="spacingAndGlyphs" >Review flags</text>
<rect x="770" y="1701.5" width="216" height="19.5" fill="#e0ffff" />
<path d="M771,1721 L771,1702.5 L986,1702.5" fill="none" stroke="#555" stroke-width="2" />
<rect x="775.5" y="1705.5" width="12" height="12" fill="#fbfbfb" stroke="#3c3c3c" stroke-width="1" rx="2.5" />
<text x="794" y="1714.6" font-size="12" textLength="157" lengthAdjust="spacingAndGlyphs" >0 items are tagged for review</text>
<rect x="655.5" y="1724" width="341.5" height="80.5" fill="#f0ffff" />
<path d="M656,1804.5 L656,1725 L997,1725" fill="none" stroke="#666" stroke-width="2" />
<line x1="655.5" y1="1805" x2="997" y2="1805" stroke="#fdfdfd" stroke-width="1" />
<text x="668" y="1749.7" font-size="12" font-weight="bold" fill="#7a0020" text-anchor="middle" >P</text>
<text x="668" y="1762.7" font-size="12" font-weight="bold" fill="#7a0020" text-anchor="middle" >L</text>
<text x="668" y="1775.6" font-size="12" font-weight="bold" fill="#7a0020" text-anchor="middle" >O</text>
<text x="668" y="1788.6" font-size="12" font-weight="bold" fill="#7a0020" text-anchor="middle" >T</text>
<text x="684" y="1746" font-size="12.5" font-weight="bold" fill="#6b0020" textLength="30" lengthAdjust="spacingAndGlyphs" >Scale</text>
<rect x="722" y="1732" width="269" height="19" fill="#fff8dc" />
<rect x="727.5" y="1738.5" width="258" height="3" fill="#e7e7e7" stroke="#d6d6d6" stroke-width="1" />
<line x1="730.5" y1="1746" x2="730.5" y2="1749" stroke="#a0a0a0" stroke-width="1" />
<line x1="742.5" y1="1746" x2="742.5" y2="1749" stroke="#a0a0a0" stroke-width="1" />
<line x1="754.5" y1="1746" x2="754.5" y2="1749" stroke="#a0a0a0" stroke-width="1" />
<line x1="766.5" y1="1746" x2="766.5" y2="1749" stroke="#a0a0a0" stroke-width="1" />
<line x1="778.5" y1="1746" x2="778.5" y2="1749" stroke="#a0a0a0" stroke-width="1" />
<line x1="790.5" y1="1746" x2="790.5" y2="1749" stroke="#a0a0a0" stroke-width="1" />
<line x1="802.5" y1="1746" x2="802.5" y2="1749" stroke="#a0a0a0" stroke-width="1" />
<line x1="814.5" y1="1746" x2="814.5" y2="1749" stroke="#a0a0a0" stroke-width="1" />
<line x1="826.5" y1="1746" x2="826.5" y2="1749" stroke="#a0a0a0" stroke-width="1" />
<line x1="838.5" y1="1746" x2="838.5" y2="1749" stroke="#a0a0a0" stroke-width="1" />
<line x1="850.5" y1="1746" x2="850.5" y2="1749" stroke="#a0a0a0" stroke-width="1" />
<line x1="862.5" y1="1746" x2="862.5" y2="1749" stroke="#a0a0a0" stroke-width="1" />
<line x1="874.5" y1="1746" x2="874.5" y2="1749" stroke="#a0a0a0" stroke-width="1" />
<line x1="886.5" y1="1746" x2="886.5" y2="1749" stroke="#a0a0a0" stroke-width="1" />
<line x1="898.5" y1="1746" x2="898.5" y2="1749" stroke="#a0a0a0" stroke-width="1" />
<line x1="910.5" y1="1746" x2="910.5" y2="1749" stroke="#a0a0a0" stroke-width="1" />
<line x1="922.5" y1="1746" x2="922.5" y2="1749" stroke="#a0a0a0" stroke-width="1" />
<line x1="934.5" y1="1746" x2="934.5" y2="1749" stroke="#a0a0a0" stroke-width="1" />
<line x1="946.5" y1="1746" x2="946.5" y2="1749" stroke="#a0a0a0" stroke-width="1" />
<line x1="958.5" y1="1746" x2="958.5" y2="1749" stroke="#a0a0a0" stroke-width="1" />
<line x1="970.5" y1="1746" x2="970.5" y2="1749" stroke="#a0a0a0" stroke-width="1" />
<line x1="982.5" y1="1746" x2="982.5" y2="1749" stroke="#a0a0a0" stroke-width="1" />
<path d="M840,1735 L846,1735 L846,1743 L843,1746 L840,1743 Z" fill="#0060c0" />
<text x="684" y="1773" font-size="12.5" font-weight="bold" fill="#6b0020" textLength="22" lengthAdjust="spacingAndGlyphs" >Size</text>
<rect x="713.5" y="1757.5" width="163" height="22" fill="#f5fff0" stroke="#e8e8e8" stroke-width="1" />
<path d="M714,1780 L714,1758 L876,1758" fill="none" stroke="#666" stroke-width="2" />
<circle cx="729.5" cy="1768.5" r="5" fill="#fff" stroke="#005fb8" stroke-width="3"/>
<text x="742" y="1773" font-size="12.5" font-weight="bold" fill="#6b0020" textLength="36" lengthAdjust="spacingAndGlyphs" >normal</text>
<circle cx="792.5" cy="1768.5" r="5.5" fill="#fafafa" stroke="#555" stroke-width="1"/>
<text x="806" y="1773" font-size="12.5" font-weight="bold" fill="#6b0020" textLength="17" lengthAdjust="spacingAndGlyphs" >x 2</text>
<circle cx="837.5" cy="1768.5" r="5.5" fill="#fafafa" stroke="#555" stroke-width="1"/>
<text x="850" y="1773" font-size="12.5" font-weight="bold" fill="#6b0020" textLength="18" lengthAdjust="spacingAndGlyphs" >x 5</text>
<text x="898" y="1773" font-size="12.5" font-weight="bold" fill="#8b008b" textLength="72" lengthAdjust="spacingAndGlyphs" >Form opacity</text>
<rect x="877" y="1779" width="114" height="21" fill="#fff8dc" />
<rect x="882.5" y="1785.5" width="103" height="3" fill="#e7e7e7" stroke="#d6d6d6" stroke-width="1" />
<line x1="885.5" y1="1795" x2="885.5" y2="1798" stroke="#a0a0a0" stroke-width="1" />
<line x1="895.5" y1="1795" x2="895.5" y2="1798" stroke="#a0a0a0" stroke-width="1" />
<line x1="904.5" y1="1795" x2="904.5" y2="1798" stroke="#a0a0a0" stroke-width="1" />
<line x1="914.5" y1="1795" x2="914.5" y2="1798" stroke="#a0a0a0" stroke-width="1" />
<line x1="924.5" y1="1795" x2="924.5" y2="1798" stroke="#a0a0a0" stroke-width="1" />
<line x1="934.5" y1="1795" x2="934.5" y2="1798" stroke="#a0a0a0" stroke-width="1" />
<line x1="943.5" y1="1795" x2="943.5" y2="1798" stroke="#a0a0a0" stroke-width="1" />
<line x1="953.5" y1="1795" x2="953.5" y2="1798" stroke="#a0a0a0" stroke-width="1" />
<line x1="963.5" y1="1795" x2="963.5" y2="1798" stroke="#a0a0a0" stroke-width="1" />
<line x1="972.5" y1="1795" x2="972.5" y2="1798" stroke="#a0a0a0" stroke-width="1" />
<line x1="982.5" y1="1795" x2="982.5" y2="1798" stroke="#a0a0a0" stroke-width="1" />
<path d="M976.5,1782 L982.5,1782 L982.5,1790 L979.5,1793 L976.5,1790 Z" fill="#0060c0" />
<text x="685" y="1798" font-size="12.5" font-weight="bold" fill="#6b0020" textLength="102" lengthAdjust="spacingAndGlyphs" >Scroll range x1.25</text>
<rect x="795.5" y="1787.5" width="12" height="12" fill="#fbfbfb" stroke="#3c3c3c" stroke-width="1" rx="2.5" />
<text x="669" y="1826" font-size="12" textLength="93" lengthAdjust="spacingAndGlyphs" >RMS fit 0.1 ±0.5 km</text>
<rect x="661" y="1837" width="326" height="268" fill="#fff" />
<path d="M662,2105 L662,1838 L987,1838" fill="none" stroke="#6a6a6a" stroke-width="2" />
<rect x="663" y="2088" width="324" height="16" fill="#f0f0f0" />
<line x1="680" y1="2096.5" x2="868" y2="2096.5" stroke="#858585" stroke-width="2" />
<line x1="986.5" y1="1837" x2="986.5" y2="2105" stroke="#e3e3e3" stroke-width="1" />
<line x1="661" y1="2104.5" x2="987" y2="2104.5" stroke="#e3e3e3" stroke-width="1" />
<line x1="668" y1="1845.5" x2="734" y2="1845.5" stroke="#4b0082" stroke-width="2" />
<line x1="668" y1="1857.5" x2="734" y2="1857.5" stroke="#ff0000" stroke-width="2" />
<circle cx="670" cy="1870" r="1.2" fill="#000"/>
<circle cx="685" cy="1870" r="1.2" fill="#000"/>
<circle cx="700" cy="1870" r="1.2" fill="#000"/>
<circle cx="715" cy="1870" r="1.2" fill="#000"/>
<circle cx="730" cy="1870" r="1.2" fill="#000"/>
<text x="757" y="1851" font-size="13.2" font-family='"Liberation Mono", monospace' >1</text>
<text x="798" y="1851" font-size="13.2" font-family='"Liberation Mono", monospace' textLength="180" lengthAdjust="spacingAndGlyphs" >Hideki Yoshihara, near</text>
<text x="757" y="1863" font-size="13.2" font-family='"Liberation Mono", monospace' >2</text>
<text x="798" y="1863" font-size="13.2" font-family='"Liberation Mono", monospace' textLength="188" lengthAdjust="spacingAndGlyphs" >Toshihiro Horikawa, nea</text>
<text x="757" y="1875" font-size="13.2" font-family='"Liberation Mono", monospace' textLength="32" lengthAdjust="spacingAndGlyphs" >3(P)</text>
<text x="798" y="1875" font-size="13.2" font-family='"Liberation Mono", monospace' textLength="72" lengthAdjust="spacingAndGlyphs" >Predicted</text>
<rect x="522.5" y="1940.5" width="449" height="131" fill="#b0c4de" stroke="#5a5a5a" stroke-width="1" />
<text x="525" y="1957" font-size="13" font-weight="bold" fill="#1f3a70" textLength="37" lengthAdjust="spacingAndGlyphs" >DAMIT</text>
<rect x="570.3" y="1946.4" width="11" height="13.5" fill="#66c2a5" stroke="#f4f4f4" stroke-width="1" rx="2.5" />
<text x="575.8" y="1956.9" font-size="11.5" text-anchor="middle" >1</text>
<rect x="587.9" y="1946.4" width="11" height="13.5" fill="#00e000" stroke="#f4f4f4" stroke-width="1" rx="2.5" />
<text x="593.4" y="1956.9" font-size="11.5" text-anchor="middle" >2</text>
<rect x="605.5" y="1946.4" width="12" height="13.5" fill="#e6e6e6" stroke="#f4f4f4" stroke-width="1" rx="2.5" />
<text x="611.5" y="1956.9" font-size="11.5" fill="#b8b8b8" text-anchor="middle" >3</text>
<rect x="623.5" y="1946.4" width="12" height="13.5" fill="#e6e6e6" stroke="#f4f4f4" stroke-width="1" rx="2.5" />
<text x="629.5" y="1956.9" font-size="11.5" fill="#b8b8b8" text-anchor="middle" >4</text>
<rect x="641.5" y="1946.4" width="12" height="13.5" fill="#e6e6e6" stroke="#f4f4f4" stroke-width="1" rx="2.5" />
<text x="647.5" y="1956.9" font-size="11.5" fill="#b8b8b8" text-anchor="middle" >5</text>
<rect x="659.1" y="1946.4" width="12" height="13.5" fill="#e6e6e6" stroke="#f4f4f4" stroke-width="1" rx="2.5" />
<text x="665.1" y="1956.9" font-size="11.5" fill="#b8b8b8" text-anchor="middle" >6</text>
<rect x="681.5" y="1945" width="68" height="16" fill="#b0eeee" stroke="#f4f4f4" stroke-width="1" rx="2" />
<text x="685.7" y="1957" font-size="12" textLength="56" lengthAdjust="spacingAndGlyphs" >Light curves</text>
<text x="757" y="1957" font-size="13" font-weight="bold" fill="#1f3a70" textLength="30" lengthAdjust="spacingAndGlyphs" >ISAM</text>
<rect x="793.5" y="1945.0" width="13" height="16" fill="#e6e6e6" stroke="#f4f4f4" stroke-width="1" rx="2.5" />
<text x="800.0" y="1958.0" font-size="11.5" fill="#b8b8b8" text-anchor="middle" >1</text>
<rect x="817.5" y="1945.0" width="13" height="16" fill="#e6e6e6" stroke="#f4f4f4" stroke-width="1" rx="2.5" />
<text x="824.0" y="1958.0" font-size="11.5" fill="#b8b8b8" text-anchor="middle" >2</text>
<rect x="841.5" y="1945.0" width="13" height="16" fill="#e6e6e6" stroke="#f4f4f4" stroke-width="1" rx="2.5" />
<text x="848.0" y="1958.0" font-size="11.5" fill="#b8b8b8" text-anchor="middle" >3</text>
<rect x="865.5" y="1945.0" width="13" height="16" fill="#e6e6e6" stroke="#f4f4f4" stroke-width="1" rx="2.5" />
<text x="872.0" y="1958.0" font-size="11.5" fill="#b8b8b8" text-anchor="middle" >4</text>
<rect x="889.5" y="1945.0" width="13" height="16" fill="#e6e6e6" stroke="#f4f4f4" stroke-width="1" rx="2.5" />
<text x="896.0" y="1958.0" font-size="11.5" fill="#b8b8b8" text-anchor="middle" >5</text>
<rect x="913.5" y="1945.0" width="13" height="16" fill="#e6e6e6" stroke="#f4f4f4" stroke-width="1" rx="2.5" />
<text x="920.0" y="1958.0" font-size="11.5" fill="#b8b8b8" text-anchor="middle" >6</text>
<rect x="938" y="1944.5" width="12.5" height="16.5" fill="#2020a0" stroke="#f0f0f0" stroke-width="1" />
<text x="944.3" y="1957.5" font-size="13" font-weight="bold" fill="#ffff00" text-anchor="middle" >?</text>
<rect x="954" y="1944.5" width="12.5" height="16.5" fill="#e01030" stroke="#f0f0f0" stroke-width="1" />
<text x="960.3" y="1957.5" font-size="12" font-weight="bold" fill="#fff" text-anchor="middle" >X</text>
<text x="530" y="1973.5" font-size="12" fill="#333" textLength="33" lengthAdjust="spacingAndGlyphs" >Source</text>
<text x="589.6" y="1973.5" font-size="12" fill="#333" textLength="9.7" lengthAdjust="spacingAndGlyphs" >ID</text>
<text x="623" y="1973.5" font-size="12" fill="#333" textLength="37.7" lengthAdjust="spacingAndGlyphs" >Surf/Vol</text>
<rect x="528.1" y="1978.8" width="37.799999999999955" height="16.5" fill="#efefef" stroke="#fdfdfd" stroke-width="1" />
<line x1="528.1" y1="1978.8" x2="565.9" y2="1978.8" stroke="#d8d8d8" stroke-width="1" />
<line x1="528.1" y1="1978.8" x2="528.1" y2="1995.3" stroke="#d8d8d8" stroke-width="1" />
<text x="530.1" y="1991.3" font-size="12" textLength="32" lengthAdjust="spacingAndGlyphs" >DAMIT</text>
<rect x="569.0" y="1978.8" width="51.700000000000045" height="16.5" fill="#efefef" stroke="#fdfdfd" stroke-width="1" />
<line x1="569.0" y1="1978.8" x2="620.7" y2="1978.8" stroke="#d8d8d8" stroke-width="1" />
<line x1="569.0" y1="1978.8" x2="569.0" y2="1995.3" stroke="#d8d8d8" stroke-width="1" />
<text x="571.0" y="1991.3" font-size="12" textLength="16" lengthAdjust="spacingAndGlyphs" >938</text>
<rect x="623.5" y="1978.8" width="37.200000000000045" height="16.5" fill="#efefef" stroke="#fdfdfd" stroke-width="1" />
<line x1="623.5" y1="1978.8" x2="660.7" y2="1978.8" stroke="#d8d8d8" stroke-width="1" />
<line x1="623.5" y1="1978.8" x2="623.5" y2="1995.3" stroke="#d8d8d8" stroke-width="1" />
<text x="625.5" y="1991.3" font-size="12" textLength="31" lengthAdjust="spacingAndGlyphs" >1.083</text>
<rect x="663.8" y="1964.3" width="301" height="47.4" fill="#fdf5d2" />
<path d="M664.3,2011.7 L664.3,1964.8 L964.7,1964.8" fill="none" stroke="#7a7a7a" stroke-width="1" />
<text x="687.5" y="1974" font-size="12" textLength="43" lengthAdjust="spacingAndGlyphs" >Fit quality</text>
<rect x="666.5" y="1979" width="96" height="19.5" fill="#fff" stroke="#7a7a7a" stroke-width="1" />
<text x="669" y="1993" font-size="12" textLength="59" lengthAdjust="spacingAndGlyphs" >Model wrong</text>
<path d="M749,1986.5 L753.5,1991 L758,1986.5" fill="none" stroke="#333" stroke-width="1" />
<text x="765" y="1974" font-size="12" textLength="40" lengthAdjust="spacingAndGlyphs" >Ph Corm</text>
<rect x="768.5" y="1979.5" width="36.5" height="17.5" fill="#efefef" stroke="#d0d0d0" stroke-width="1" />
<text x="770.5" y="1992" font-size="12" >0°</text>
<text x="816" y="1974" font-size="12" textLength="57" lengthAdjust="spacingAndGlyphs" >Minimum dia</text>
<rect x="814.5" y="1979.5" width="36.5" height="17.5" fill="#ffc0cb" stroke="#e0e0e0" stroke-width="1" />
<rect x="855.5" y="1979.5" width="28" height="21.5" fill="#99ff33" stroke="#f4f4f4" stroke-width="2" rx="2" />
<text x="860" y="1993.5" font-size="12" textLength="15" lengthAdjust="spacingAndGlyphs" >Set</text>
<text x="892" y="1975" font-size="12" textLength="60" lengthAdjust="spacingAndGlyphs" >Maximum dia</text>
<rect x="892.5" y="1979.5" width="36.5" height="17.5" fill="#ffc0cb" stroke="#e0e0e0" stroke-width="1" />
<rect x="932.5" y="1979.5" width="28.5" height="21.5" fill="#99ff33" stroke="#f4f4f4" stroke-width="2" rx="2" />
<text x="938" y="1993.5" font-size="12" textLength="15" lengthAdjust="spacingAndGlyphs" >Set</text>
<text x="668.6" y="2009" font-size="12" fill="#6a1b9a" textLength="59" lengthAdjust="spacingAndGlyphs" >Model wrong</text>
<text x="769" y="2009" font-size="12" fill="#6a1b9a" >0°</text>
<text x="815" y="2010" font-size="12" fill="#6a1b9a" >0</text>
<text x="893" y="2009" font-size="10" fill="#6a1b9a" textLength="22" lengthAdjust="spacingAndGlyphs" >- - - -</text>
<rect x="525.5" y="1997.5" width="33" height="20.5" fill="#ffff00" stroke="#333" stroke-width="1" />
<text x="542" y="2012.5" font-size="13" font-weight="bold" text-anchor="middle" >Dia</text>
<text x="562.4" y="2009" font-size="12" fill="#3a4a6a" font-style="italic" textLength="96" lengthAdjust="spacingAndGlyphs" >Values in memory =&gt;</text>
<text x="530.3" y="2029.4" font-size="12" fill="#333" textLength="53.7" lengthAdjust="spacingAndGlyphs" >Version info</text>
<rect x="590.5" y="2018" width="268.5" height="17.5" fill="#efefef" stroke="#fdfdfd" stroke-width="1" />
<line x1="590.5" y1="2018" x2="859" y2="2018" stroke="#d8d8d8" stroke-width="1" />
<text x="593.5" y="2031" font-size="12" textLength="53" lengthAdjust="spacingAndGlyphs" >2016-01-04</text>
<text x="529.5" y="2053.9" font-size="12" fill="#333" textLength="55" lengthAdjust="spacingAndGlyphs" >Image scale</text>
<rect x="591" y="2041.5" width="268.5" height="22" fill="#fff8dc" />
<rect x="596" y="2055.5" width="257.5" height="4" fill="#e7e7e7" stroke="#d6d6d6" stroke-width="1" />
<line x1="599.5" y1="2045.5" x2="599.5" y2="2048.5" stroke="#a0a0a0" stroke-width="1" />
<line x1="608.5" y1="2045.5" x2="608.5" y2="2048.5" stroke="#a0a0a0" stroke-width="1" />
<line x1="617.5" y1="2045.5" x2="617.5" y2="2048.5" stroke="#a0a0a0" stroke-width="1" />
<line x1="626.5" y1="2045.5" x2="626.5" y2="2048.5" stroke="#a0a0a0" stroke-width="1" />
<line x1="635.5" y1="2045.5" x2="635.5" y2="2048.5" stroke="#a0a0a0" stroke-width="1" />
<line x1="644.5" y1="2045.5" x2="644.5" y2="2048.5" stroke="#a0a0a0" stroke-width="1" />
<line x1="653.5" y1="2045.5" x2="653.5" y2="2048.5" stroke="#a0a0a0" stroke-width="1" />
<line x1="662.5" y1="2045.5" x2="662.5" y2="2048.5" stroke="#a0a0a0" stroke-width="1" />
<line x1="671.5" y1="2045.5" x2="671.5" y2="2048.5" stroke="#a0a0a0" stroke-width="1" />
<line x1="680.5" y1="2045.5" x2="680.5" y2="2048.5" stroke="#a0a0a0" stroke-width="1" />
<line x1="689.5" y1="2045.5" x2="689.5" y2="2048.5" stroke="#a0a0a0" stroke-width="1" />
<line x1="698.5" y1="2045.5" x2="698.5" y2="2048.5" stroke="#a0a0a0" stroke-width="1" />
<line x1="707.5" y1="2045.5" x2="707.5" y2="2048.5" stroke="#a0a0a0" stroke-width="1" />
<line x1="716.5" y1="2045.5" x2="716.5" y2="2048.5" stroke="#a0a0a0" stroke-width="1" />
<line x1="725.5" y1="2045.5" x2="725.5" y2="2048.5" stroke="#a0a0a0" stroke-width="1" />
<line x1="734.5" y1="2045.5" x2="734.5" y2="2048.5" stroke="#a0a0a0" stroke-width="1" />
<line x1="743.5" y1="2045.5" x2="743.5" y2="2048.5" stroke="#a0a0a0" stroke-width="1" />
<line x1="752.5" y1="2045.5" x2="752.5" y2="2048.5" stroke="#a0a0a0" stroke-width="1" />
<line x1="761.5" y1="2045.5" x2="761.5" y2="2048.5" stroke="#a0a0a0" stroke-width="1" />
<line x1="770.5" y1="2045.5" x2="770.5" y2="2048.5" stroke="#a0a0a0" stroke-width="1" />
<line x1="779.5" y1="2045.5" x2="779.5" y2="2048.5" stroke="#a0a0a0" stroke-width="1" />
<line x1="788.5" y1="2045.5" x2="788.5" y2="2048.5" stroke="#a0a0a0" stroke-width="1" />
<line x1="797.5" y1="2045.5" x2="797.5" y2="2048.5" stroke="#a0a0a0" stroke-width="1" />
<line x1="806.5" y1="2045.5" x2="806.5" y2="2048.5" stroke="#a0a0a0" stroke-width="1" />
<line x1="815.5" y1="2045.5" x2="815.5" y2="2048.5" stroke="#a0a0a0" stroke-width="1" />
<line x1="824.5" y1="2045.5" x2="824.5" y2="2048.5" stroke="#a0a0a0" stroke-width="1" />
<line x1="833.5" y1="2045.5" x2="833.5" y2="2048.5" stroke="#a0a0a0" stroke-width="1" />
<line x1="842.5" y1="2045.5" x2="842.5" y2="2048.5" stroke="#a0a0a0" stroke-width="1" />
<line x1="850.5" y1="2045.5" x2="850.5" y2="2048.5" stroke="#a0a0a0" stroke-width="1" />
<path d="M700.9,2059.5 L700.9,2054.5 L703.9,2050.5 L706.9,2054.5 L706.9,2059.5 Z" fill="#0060c0" />
<rect x="869.5" y="2022.5" width="95" height="43" fill="#ffc0cb" stroke="#f4f4f4" stroke-width="2" rx="3" />
<text x="881" y="2040" font-size="12.5" font-weight="bold" fill="#a00028" textLength="72.6" lengthAdjust="spacingAndGlyphs" >Save/update</text>
<text x="887.5" y="2053.3" font-size="12.5" font-weight="bold" fill="#a00028" textLength="58" lengthAdjust="spacingAndGlyphs" >model 938</text>
</svg></body></html>
